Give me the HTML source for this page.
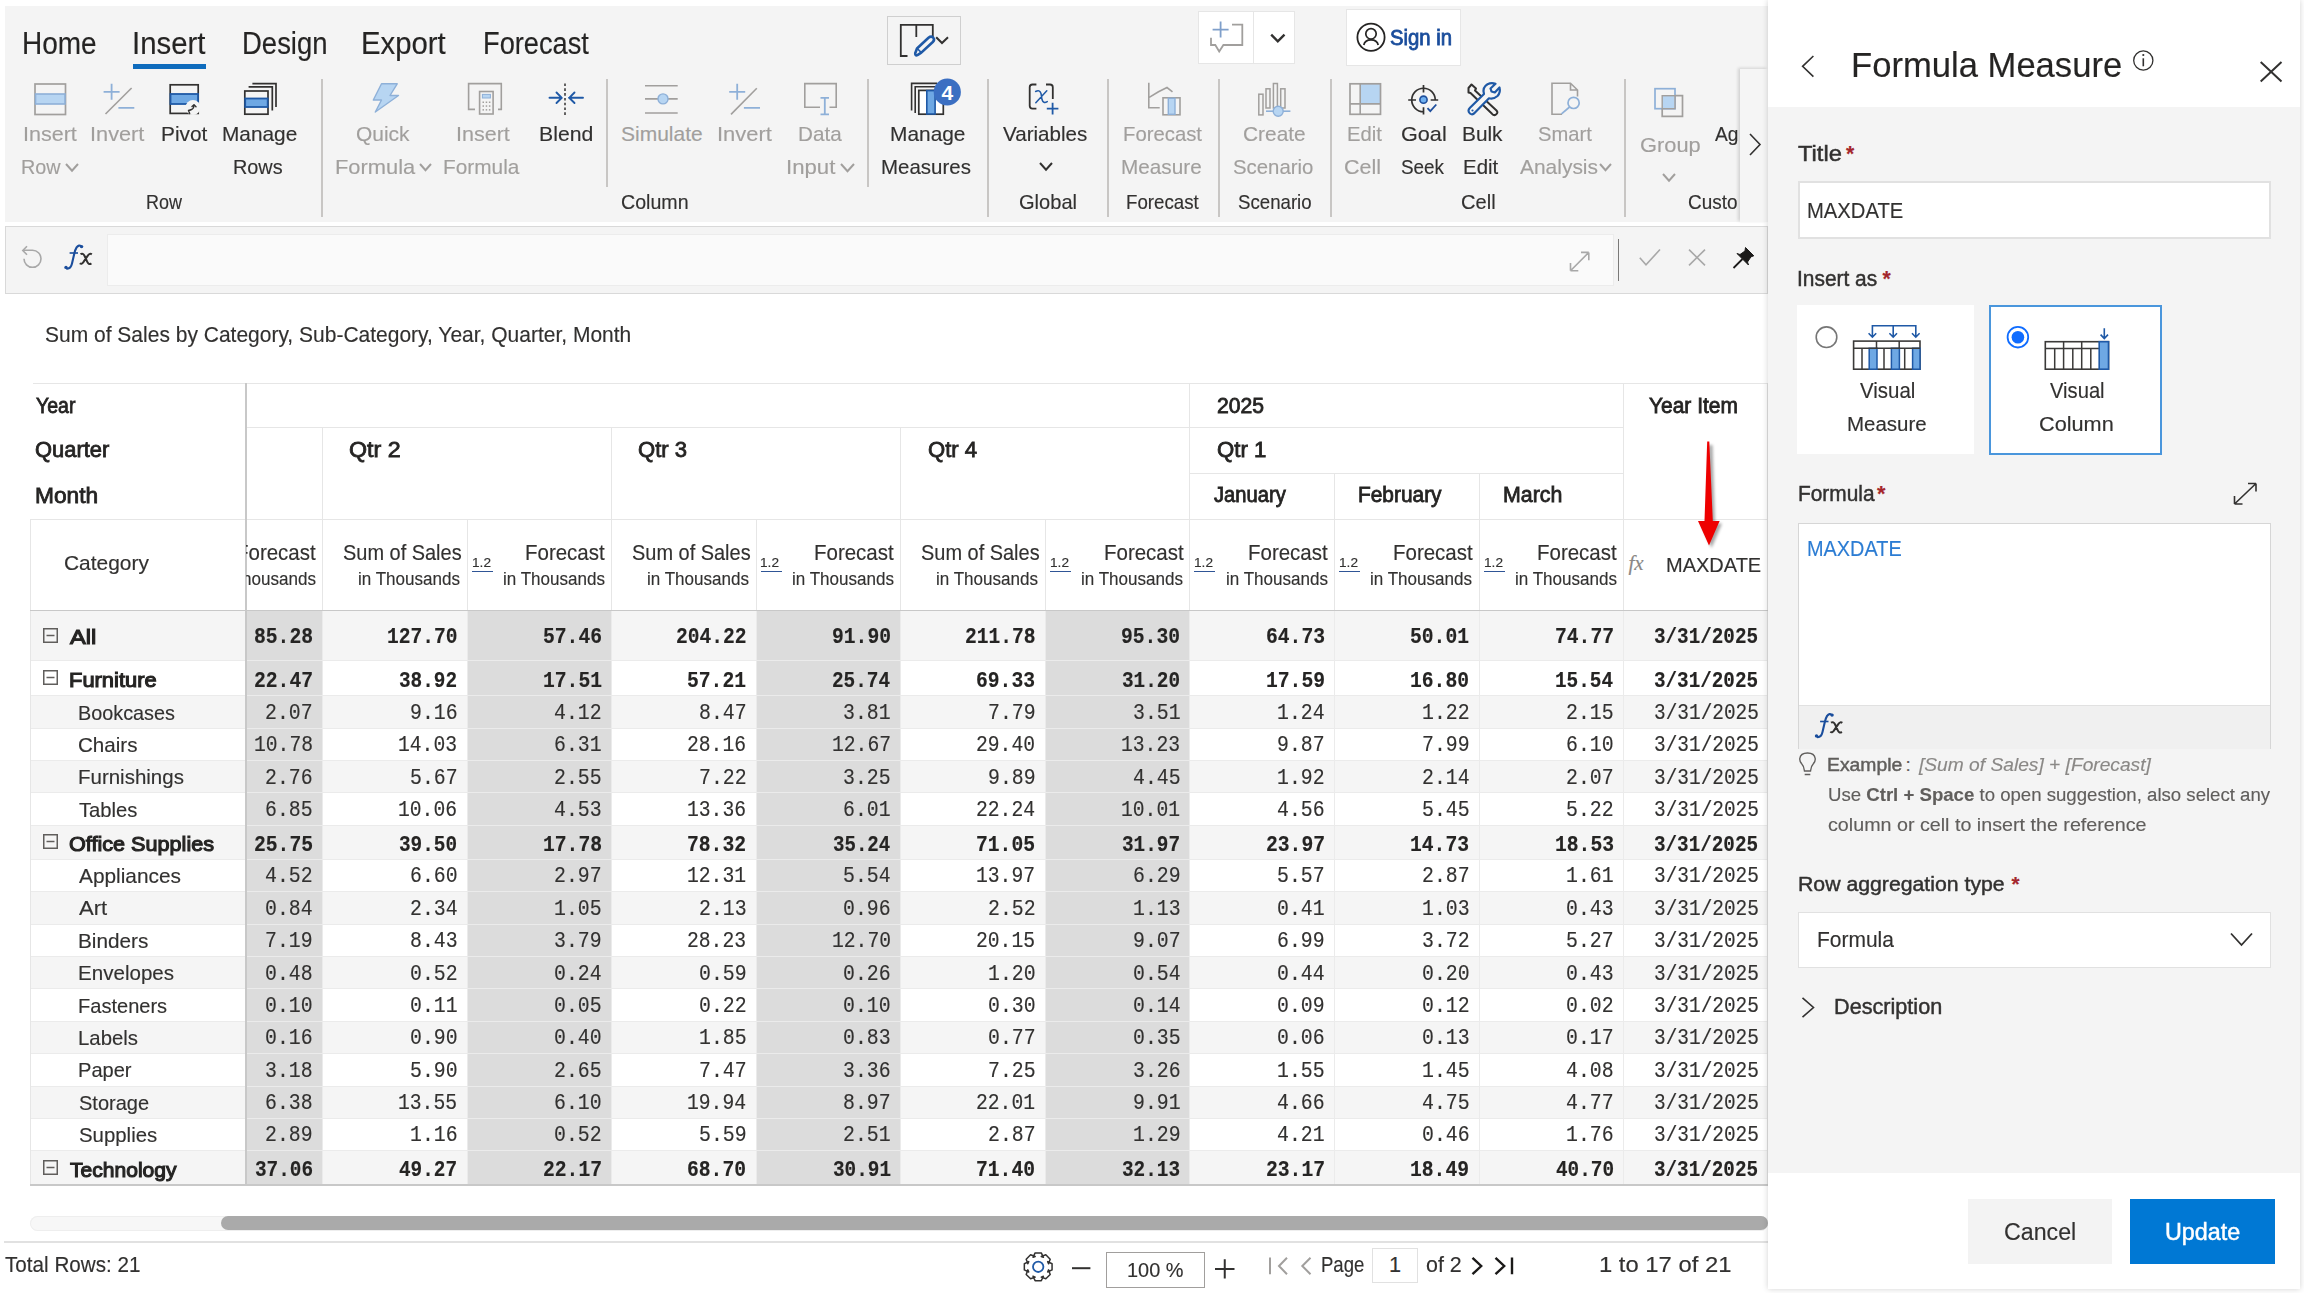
<!DOCTYPE html>
<html><head><meta charset="utf-8"><title>Formula Measure</title>
<style>
html,body{margin:0;padding:0;}
body{width:2304px;height:1293px;position:relative;overflow:hidden;background:#fff;font-family:'Liberation Sans', sans-serif;}
.a{position:absolute;}
.t{position:absolute;white-space:nowrap;line-height:1;-webkit-text-stroke:0.15px currentColor;}
</style></head><body>
<div class="a" style="left:5px;top:6px;width:1763px;height:216px;background:#f4f4f4;"></div>
<div class="t" id="t1" style="top:27.68px;font-size:30.43px;color:#252423;font-weight:normal;font-family:'Liberation Sans', sans-serif;font-style:normal;left:22.16px;transform:scaleX(0.9204);transform-origin:0 50%;">Home</div>
<div class="t" id="t2" style="top:27.68px;font-size:30.43px;color:#252423;font-weight:normal;font-family:'Liberation Sans', sans-serif;font-style:normal;left:132.07px;transform:scaleX(0.9647);transform-origin:0 50%;">Insert</div>
<div class="t" id="t3" style="top:27.68px;font-size:30.43px;color:#252423;font-weight:normal;font-family:'Liberation Sans', sans-serif;font-style:normal;left:241.69px;transform:scaleX(0.9033);transform-origin:0 50%;">Design</div>
<div class="t" id="t4" style="top:27.68px;font-size:30.43px;color:#252423;font-weight:normal;font-family:'Liberation Sans', sans-serif;font-style:normal;left:361.37px;transform:scaleX(0.9633);transform-origin:0 50%;">Export</div>
<div class="t" id="t5" style="top:27.68px;font-size:30.43px;color:#252423;font-weight:normal;font-family:'Liberation Sans', sans-serif;font-style:normal;left:482.61px;transform:scaleX(0.8948);transform-origin:0 50%;">Forecast</div>
<div class="a" style="left:133px;top:64px;width:73px;height:5px;background:#0f6cbd;"></div>
<div class="a" style="left:887px;top:16px;width:74px;height:49px;background:#f4f4f4;box-sizing:border-box;border:1px solid #cfcfcf;"></div>
<div class="a" style="left:1198px;top:11px;width:97px;height:53px;background:#fff;box-sizing:border-box;border:1px solid #e6e6e6;"></div>
<div class="a" style="left:1253px;top:11px;width:1px;height:53px;background:#e6e6e6;"></div>
<div class="a" style="left:1346px;top:9px;width:115px;height:57px;background:#fff;box-sizing:border-box;border:1px solid #e6e6e6;"></div>
<div class="t" id="t6" style="top:27.32px;font-size:21.16px;color:#1a4d9c;font-weight:normal;font-family:'Liberation Sans', sans-serif;font-style:normal;-webkit-text-stroke:0.8px currentColor;left:1389.50px;transform:scaleX(0.9606);transform-origin:0 50%;">Sign in</div>
<div class="a" style="left:321px;top:79px;width:2px;height:138px;background:#c8c6c4;"></div>
<div class="a" style="left:606px;top:79px;width:2px;height:108px;background:#c8c6c4;"></div>
<div class="a" style="left:867px;top:79px;width:2px;height:108px;background:#c8c6c4;"></div>
<div class="a" style="left:987px;top:79px;width:2px;height:138px;background:#c8c6c4;"></div>
<div class="a" style="left:1107px;top:79px;width:2px;height:138px;background:#c8c6c4;"></div>
<div class="a" style="left:1218px;top:79px;width:2px;height:138px;background:#c8c6c4;"></div>
<div class="a" style="left:1330px;top:79px;width:2px;height:138px;background:#c8c6c4;"></div>
<div class="a" style="left:1624px;top:79px;width:2px;height:138px;background:#c8c6c4;"></div>
<div class="t" id="t7" style="top:123.44px;font-size:21.01px;color:#a19f9d;font-weight:normal;font-family:'Liberation Sans', sans-serif;font-style:normal;left:22.97px;transform:scaleX(1.0254);transform-origin:0 50%;">Insert</div>
<div class="t" id="t8" style="top:155.54px;font-size:21.01px;color:#a19f9d;font-weight:normal;font-family:'Liberation Sans', sans-serif;font-style:normal;left:20.66px;transform:scaleX(0.9416);transform-origin:0 50%;">Row</div>
<svg class="a" style="left:65px;top:163px;" width="14" height="9.699999999999989" viewBox="0 0 14 9.699999999999989" fill="none"><polyline points="1,1 7.0,7.700000000000001 13,1" stroke="#a19f9d" stroke-width="2" fill="none"/></svg>
<div class="t" id="t9" style="top:123.44px;font-size:21.01px;color:#a19f9d;font-weight:normal;font-family:'Liberation Sans', sans-serif;font-style:normal;left:89.96px;transform:scaleX(1.0351);transform-origin:0 50%;">Invert</div>
<div class="t" id="t10" style="top:123.44px;font-size:21.01px;color:#323130;font-weight:normal;font-family:'Liberation Sans', sans-serif;font-style:normal;left:160.51px;transform:scaleX(0.9923);transform-origin:0 50%;">Pivot</div>
<div class="t" id="t11" style="top:123.44px;font-size:21.01px;color:#323130;font-weight:normal;font-family:'Liberation Sans', sans-serif;font-style:normal;left:222.41px;transform:scaleX(0.9918);transform-origin:0 50%;">Manage</div>
<div class="t" id="t12" style="top:155.54px;font-size:21.01px;color:#323130;font-weight:normal;font-family:'Liberation Sans', sans-serif;font-style:normal;left:233.46px;transform:scaleX(0.9449);transform-origin:0 50%;">Rows</div>
<div class="t" id="t13" style="top:190.84px;font-size:21.01px;color:#323130;font-weight:normal;font-family:'Liberation Sans', sans-serif;font-style:normal;left:146.14px;transform:scaleX(0.8555);transform-origin:0 50%;">Row</div>
<div class="t" id="t14" style="top:123.44px;font-size:21.01px;color:#a19f9d;font-weight:normal;font-family:'Liberation Sans', sans-serif;font-style:normal;left:356.00px;transform:scaleX(0.9966);transform-origin:0 50%;">Quick</div>
<div class="t" id="t15" style="top:155.54px;font-size:21.01px;color:#a19f9d;font-weight:normal;font-family:'Liberation Sans', sans-serif;font-style:normal;left:335.46px;transform:scaleX(1.0414);transform-origin:0 50%;">Formula</div>
<svg class="a" style="left:419px;top:163px;" width="13" height="9.150000000000006" viewBox="0 0 13 9.150000000000006" fill="none"><polyline points="1,1 6.5,7.15 12,1" stroke="#a19f9d" stroke-width="2" fill="none"/></svg>
<div class="t" id="t16" style="top:123.44px;font-size:21.01px;color:#a19f9d;font-weight:normal;font-family:'Liberation Sans', sans-serif;font-style:normal;left:455.97px;transform:scaleX(1.0254);transform-origin:0 50%;">Insert</div>
<div class="t" id="t17" style="top:155.54px;font-size:21.01px;color:#a19f9d;font-weight:normal;font-family:'Liberation Sans', sans-serif;font-style:normal;left:443.01px;transform:scaleX(0.9916);transform-origin:0 50%;">Formula</div>
<div class="t" id="t18" style="top:123.44px;font-size:21.01px;color:#323130;font-weight:normal;font-family:'Liberation Sans', sans-serif;font-style:normal;left:538.99px;transform:scaleX(1.0109);transform-origin:0 50%;">Blend</div>
<div class="t" id="t19" style="top:123.44px;font-size:21.01px;color:#a19f9d;font-weight:normal;font-family:'Liberation Sans', sans-serif;font-style:normal;left:621.00px;">Simulate</div>
<div class="t" id="t20" style="top:123.44px;font-size:21.01px;color:#a19f9d;font-weight:normal;font-family:'Liberation Sans', sans-serif;font-style:normal;left:716.96px;transform:scaleX(1.0448);transform-origin:0 50%;">Invert</div>
<div class="t" id="t21" style="top:123.44px;font-size:21.01px;color:#a19f9d;font-weight:normal;font-family:'Liberation Sans', sans-serif;font-style:normal;left:798.02px;transform:scaleX(0.9845);transform-origin:0 50%;">Data</div>
<div class="t" id="t22" style="top:155.54px;font-size:21.01px;color:#a19f9d;font-weight:normal;font-family:'Liberation Sans', sans-serif;font-style:normal;left:786.44px;transform:scaleX(1.0573);transform-origin:0 50%;">Input</div>
<svg class="a" style="left:840px;top:163px;" width="15" height="10.25" viewBox="0 0 15 10.25" fill="none"><polyline points="1,1 7.5,8.25 14,1" stroke="#a19f9d" stroke-width="2" fill="none"/></svg>
<div class="t" id="t23" style="top:190.84px;font-size:21.01px;color:#323130;font-weight:normal;font-family:'Liberation Sans', sans-serif;font-style:normal;left:621.07px;transform:scaleX(0.9338);transform-origin:0 50%;">Column</div>
<div class="t" id="t24" style="top:123.44px;font-size:21.01px;color:#323130;font-weight:normal;font-family:'Liberation Sans', sans-serif;font-style:normal;left:890.41px;transform:scaleX(0.9945);transform-origin:0 50%;">Manage</div>
<div class="t" id="t25" style="top:155.54px;font-size:21.01px;color:#323130;font-weight:normal;font-family:'Liberation Sans', sans-serif;font-style:normal;left:881.33px;transform:scaleX(0.9746);transform-origin:0 50%;">Measures</div>
<div class="t" id="t26" style="top:123.44px;font-size:21.01px;color:#323130;font-weight:normal;font-family:'Liberation Sans', sans-serif;font-style:normal;left:1002.60px;transform:scaleX(0.9802);transform-origin:0 50%;">Variables</div>
<svg class="a" style="left:1039px;top:162px;" width="14" height="9.699999999999989" viewBox="0 0 14 9.699999999999989" fill="none"><polyline points="1,1 7.0,7.700000000000001 13,1" stroke="#323130" stroke-width="2" fill="none"/></svg>
<div class="t" id="t27" style="top:190.84px;font-size:21.01px;color:#323130;font-weight:normal;font-family:'Liberation Sans', sans-serif;font-style:normal;left:1019.04px;transform:scaleX(0.9553);transform-origin:0 50%;">Global</div>
<div class="t" id="t28" style="top:123.44px;font-size:21.01px;color:#a19f9d;font-weight:normal;font-family:'Liberation Sans', sans-serif;font-style:normal;left:1123.43px;transform:scaleX(0.9671);transform-origin:0 50%;">Forecast</div>
<div class="t" id="t29" style="top:155.54px;font-size:21.01px;color:#a19f9d;font-weight:normal;font-family:'Liberation Sans', sans-serif;font-style:normal;left:1121.01px;transform:scaleX(0.9872);transform-origin:0 50%;">Measure</div>
<div class="t" id="t30" style="top:190.84px;font-size:21.01px;color:#323130;font-weight:normal;font-family:'Liberation Sans', sans-serif;font-style:normal;left:1126.11px;transform:scaleX(0.8904);transform-origin:0 50%;">Forecast</div>
<div class="t" id="t31" style="top:123.44px;font-size:21.01px;color:#a19f9d;font-weight:normal;font-family:'Liberation Sans', sans-serif;font-style:normal;left:1243.01px;transform:scaleX(0.9943);transform-origin:0 50%;">Create</div>
<div class="t" id="t32" style="top:155.54px;font-size:21.01px;color:#a19f9d;font-weight:normal;font-family:'Liberation Sans', sans-serif;font-style:normal;left:1232.80px;transform:scaleX(0.9695);transform-origin:0 50%;">Scenario</div>
<div class="t" id="t33" style="top:190.84px;font-size:21.01px;color:#323130;font-weight:normal;font-family:'Liberation Sans', sans-serif;font-style:normal;left:1238.00px;transform:scaleX(0.8880);transform-origin:0 50%;">Scenario</div>
<div class="t" id="t34" style="top:123.44px;font-size:21.01px;color:#a19f9d;font-weight:normal;font-family:'Liberation Sans', sans-serif;font-style:normal;left:1347.04px;transform:scaleX(0.9618);transform-origin:0 50%;">Edit</div>
<div class="t" id="t35" style="top:155.54px;font-size:21.01px;color:#a19f9d;font-weight:normal;font-family:'Liberation Sans', sans-serif;font-style:normal;left:1343.97px;transform:scaleX(1.0258);transform-origin:0 50%;">Cell</div>
<div class="t" id="t36" style="top:123.44px;font-size:21.01px;color:#323130;font-weight:normal;font-family:'Liberation Sans', sans-serif;font-style:normal;left:1400.97px;transform:scaleX(1.0306);transform-origin:0 50%;">Goal</div>
<div class="t" id="t37" style="top:155.54px;font-size:21.01px;color:#323130;font-weight:normal;font-family:'Liberation Sans', sans-serif;font-style:normal;left:1400.50px;transform:scaleX(0.8994);transform-origin:0 50%;">Seek</div>
<div class="t" id="t38" style="top:123.44px;font-size:21.01px;color:#323130;font-weight:normal;font-family:'Liberation Sans', sans-serif;font-style:normal;left:1462.01px;transform:scaleX(0.9913);transform-origin:0 50%;">Bulk</div>
<div class="t" id="t39" style="top:155.54px;font-size:21.01px;color:#323130;font-weight:normal;font-family:'Liberation Sans', sans-serif;font-style:normal;left:1462.63px;transform:scaleX(0.9731);transform-origin:0 50%;">Edit</div>
<div class="t" id="t40" style="top:123.44px;font-size:21.01px;color:#a19f9d;font-weight:normal;font-family:'Liberation Sans', sans-serif;font-style:normal;left:1538.00px;transform:scaleX(0.9613);transform-origin:0 50%;">Smart</div>
<div class="t" id="t41" style="top:155.54px;font-size:21.01px;color:#a19f9d;font-weight:normal;font-family:'Liberation Sans', sans-serif;font-style:normal;left:1519.50px;transform:scaleX(0.9975);transform-origin:0 50%;">Analysis</div>
<svg class="a" style="left:1599px;top:163px;" width="13" height="9.150000000000006" viewBox="0 0 13 9.150000000000006" fill="none"><polyline points="1,1 6.5,7.15 12,1" stroke="#a19f9d" stroke-width="2" fill="none"/></svg>
<div class="t" id="t42" style="top:190.84px;font-size:21.01px;color:#323130;font-weight:normal;font-family:'Liberation Sans', sans-serif;font-style:normal;left:1461.04px;transform:scaleX(0.9562);transform-origin:0 50%;">Cell</div>
<div class="t" id="t43" style="top:133.64px;font-size:21.01px;color:#a19f9d;font-weight:normal;font-family:'Liberation Sans', sans-serif;font-style:normal;left:1639.96px;transform:scaleX(1.0408);transform-origin:0 50%;">Group</div>
<svg class="a" style="left:1662px;top:173px;" width="14" height="9.699999999999989" viewBox="0 0 14 9.699999999999989" fill="none"><polyline points="1,1 7.0,7.700000000000001 13,1" stroke="#a19f9d" stroke-width="2" fill="none"/></svg>
<div class="t" id="t44" style="top:123.44px;font-size:21.01px;color:#323130;font-weight:normal;font-family:'Liberation Sans', sans-serif;font-style:normal;left:1715.00px;transform:scaleX(0.9118);transform-origin:0 50%;">Ag</div>
<div class="t" id="t45" style="top:190.84px;font-size:21.01px;color:#323130;font-weight:normal;font-family:'Liberation Sans', sans-serif;font-style:normal;left:1688.10px;transform:scaleX(0.9026);transform-origin:0 50%;">Custo</div>
<div class="a" style="left:1740px;top:69px;width:28px;height:153px;background:#f5f5f5;box-shadow:-2px -1px 3px rgba(0,0,0,0.14);"></div>
<svg class="a" style="left:1748px;top:133px;" width="14" height="24" viewBox="0 0 14 24" fill="none"><polyline points="2,1 12,11.5 2,22" stroke="#323130" stroke-width="1.6" fill="none"/></svg>
<div class="a" style="left:5px;top:226px;width:1763px;height:68px;background:#f4f4f4;box-sizing:border-box;border:1px solid #d9d9d9;"></div>
<div class="a" style="left:107px;top:234px;width:1507px;height:52px;background:#fafafa;box-sizing:border-box;border:1px solid #ececec;"></div>
<div class="a" style="left:1617.5px;top:239px;width:1.0px;height:42px;background:#7a7978;"></div>
<div class="t" id="t46" style="top:323.53px;font-size:21.74px;color:#323130;font-weight:normal;font-family:'Liberation Sans', sans-serif;font-style:normal;left:45.40px;transform:scaleX(0.9661);transform-origin:0 50%;">Sum of Sales by Category, Sub-Category, Year, Quarter, Month</div>
<div class="a" style="left:30px;top:383px;width:1738px;height:228px;background:#fff;"></div>
<div class="a" style="left:30px;top:611px;width:1738px;height:49.299999999999955px;background:#f5f5f5;"></div>
<div class="a" style="left:30px;top:660.3px;width:1738px;height:35.0px;background:#ffffff;"></div>
<div class="a" style="left:30px;top:695.3px;width:1738px;height:32.40000000000009px;background:#f5f5f5;"></div>
<div class="a" style="left:30px;top:727.7px;width:1738px;height:32.39999999999998px;background:#ffffff;"></div>
<div class="a" style="left:30px;top:760.1px;width:1738px;height:32.299999999999955px;background:#f5f5f5;"></div>
<div class="a" style="left:30px;top:792.4px;width:1738px;height:32.39999999999998px;background:#ffffff;"></div>
<div class="a" style="left:30px;top:824.8px;width:1738px;height:34.0px;background:#f5f5f5;"></div>
<div class="a" style="left:30px;top:858.8px;width:1738px;height:32.40000000000009px;background:#ffffff;"></div>
<div class="a" style="left:30px;top:891.2px;width:1738px;height:32.39999999999998px;background:#f5f5f5;"></div>
<div class="a" style="left:30px;top:923.6px;width:1738px;height:32.39999999999998px;background:#ffffff;"></div>
<div class="a" style="left:30px;top:956.0px;width:1738px;height:32.299999999999955px;background:#f5f5f5;"></div>
<div class="a" style="left:30px;top:988.3px;width:1738px;height:32.40000000000009px;background:#ffffff;"></div>
<div class="a" style="left:30px;top:1020.7px;width:1738px;height:32.399999999999864px;background:#f5f5f5;"></div>
<div class="a" style="left:30px;top:1053.1px;width:1738px;height:32.40000000000009px;background:#ffffff;"></div>
<div class="a" style="left:30px;top:1085.5px;width:1738px;height:32.40000000000009px;background:#f5f5f5;"></div>
<div class="a" style="left:30px;top:1117.9px;width:1738px;height:32.299999999999955px;background:#ffffff;"></div>
<div class="a" style="left:30px;top:1150.2px;width:1738px;height:34.700000000000045px;background:#f5f5f5;"></div>
<div class="a" style="left:246px;top:611px;width:76px;height:573.9000000000001px;background:#dcdcdc;"></div>
<div class="a" style="left:466.6px;top:611px;width:144.39999999999998px;height:573.9000000000001px;background:#dcdcdc;"></div>
<div class="a" style="left:755.5px;top:611px;width:144.5px;height:573.9000000000001px;background:#dcdcdc;"></div>
<div class="a" style="left:1044.8px;top:611px;width:144.60000000000014px;height:573.9000000000001px;background:#dcdcdc;"></div>
<div class="a" style="left:30px;top:660.3px;width:1738px;height:1.0px;background:#ebebeb;"></div>
<div class="a" style="left:30px;top:695.3px;width:1738px;height:1.0px;background:#ebebeb;"></div>
<div class="a" style="left:30px;top:727.7px;width:1738px;height:1.0px;background:#ebebeb;"></div>
<div class="a" style="left:30px;top:760.1px;width:1738px;height:1.0px;background:#ebebeb;"></div>
<div class="a" style="left:30px;top:792.4px;width:1738px;height:1.0px;background:#ebebeb;"></div>
<div class="a" style="left:30px;top:824.8px;width:1738px;height:1.0px;background:#ebebeb;"></div>
<div class="a" style="left:30px;top:858.8px;width:1738px;height:1.0px;background:#ebebeb;"></div>
<div class="a" style="left:30px;top:891.2px;width:1738px;height:1.0px;background:#ebebeb;"></div>
<div class="a" style="left:30px;top:923.6px;width:1738px;height:1.0px;background:#ebebeb;"></div>
<div class="a" style="left:30px;top:956.0px;width:1738px;height:1.0px;background:#ebebeb;"></div>
<div class="a" style="left:30px;top:988.3px;width:1738px;height:1.0px;background:#ebebeb;"></div>
<div class="a" style="left:30px;top:1020.7px;width:1738px;height:1.0px;background:#ebebeb;"></div>
<div class="a" style="left:30px;top:1053.1px;width:1738px;height:1.0px;background:#ebebeb;"></div>
<div class="a" style="left:30px;top:1085.5px;width:1738px;height:1.0px;background:#ebebeb;"></div>
<div class="a" style="left:30px;top:1117.9px;width:1738px;height:1.0px;background:#ebebeb;"></div>
<div class="a" style="left:30px;top:1150.2px;width:1738px;height:1.0px;background:#ebebeb;"></div>
<div class="a" style="left:322px;top:611px;width:1px;height:573.9000000000001px;background:#ebebeb;"></div>
<div class="a" style="left:466.6px;top:611px;width:1.0px;height:573.9000000000001px;background:#ebebeb;"></div>
<div class="a" style="left:611px;top:611px;width:1px;height:573.9000000000001px;background:#ebebeb;"></div>
<div class="a" style="left:755.5px;top:611px;width:1.0px;height:573.9000000000001px;background:#ebebeb;"></div>
<div class="a" style="left:900px;top:611px;width:1px;height:573.9000000000001px;background:#ebebeb;"></div>
<div class="a" style="left:1044.8px;top:611px;width:1.0px;height:573.9000000000001px;background:#ebebeb;"></div>
<div class="a" style="left:1189.4px;top:611px;width:1.0px;height:573.9000000000001px;background:#ebebeb;"></div>
<div class="a" style="left:1334px;top:611px;width:1px;height:573.9000000000001px;background:#ebebeb;"></div>
<div class="a" style="left:1478.6px;top:611px;width:1.0px;height:573.9000000000001px;background:#ebebeb;"></div>
<div class="a" style="left:1623.2px;top:611px;width:1.0px;height:573.9000000000001px;background:#ebebeb;"></div>
<div class="a" style="left:33px;top:383px;width:1735px;height:1px;background:#e6e6e6;"></div>
<div class="a" style="left:246px;top:427px;width:1377px;height:1px;background:#e6e6e6;"></div>
<div class="a" style="left:1189px;top:473px;width:434px;height:1px;background:#e6e6e6;"></div>
<div class="a" style="left:30px;top:519px;width:1738px;height:1px;background:#e6e6e6;"></div>
<div class="a" style="left:322px;top:427px;width:1px;height:184px;background:#e6e6e6;"></div>
<div class="a" style="left:611px;top:427px;width:1px;height:184px;background:#e6e6e6;"></div>
<div class="a" style="left:900px;top:427px;width:1px;height:184px;background:#e6e6e6;"></div>
<div class="a" style="left:1189px;top:383px;width:1px;height:228px;background:#e6e6e6;"></div>
<div class="a" style="left:1623px;top:383px;width:1px;height:228px;background:#e6e6e6;"></div>
<div class="a" style="left:466.6px;top:519px;width:1.0px;height:92px;background:#e6e6e6;"></div>
<div class="a" style="left:755.5px;top:519px;width:1.0px;height:92px;background:#e6e6e6;"></div>
<div class="a" style="left:1044.8px;top:519px;width:1.0px;height:92px;background:#e6e6e6;"></div>
<div class="a" style="left:1334px;top:473px;width:1px;height:138px;background:#e6e6e6;"></div>
<div class="a" style="left:1478.6px;top:473px;width:1.0px;height:138px;background:#e6e6e6;"></div>
<div class="a" style="left:30px;top:519px;width:1px;height:665.9000000000001px;background:#e6e6e6;"></div>
<div class="a" style="left:1767px;top:383px;width:1px;height:801.9000000000001px;background:#e1e1e1;"></div>
<div class="a" style="left:30px;top:610px;width:1738px;height:1px;background:#c8c8c8;"></div>
<div class="a" style="left:30px;top:1183.9px;width:1738px;height:2.0px;background:#c8c8c8;"></div>
<div class="a" style="left:245px;top:383px;width:2px;height:801.9000000000001px;background:#c8c8c8;"></div>
<div class="t" id="t47" style="top:395.38px;font-size:21.74px;color:#252423;font-weight:normal;font-family:'Liberation Sans', sans-serif;font-style:normal;-webkit-text-stroke:0.8px currentColor;left:36.40px;transform:scaleX(0.8975);transform-origin:0 50%;">Year</div>
<div class="t" id="t48" style="top:439.13px;font-size:21.74px;color:#252423;font-weight:normal;font-family:'Liberation Sans', sans-serif;font-style:normal;-webkit-text-stroke:0.8px currentColor;left:34.99px;transform:scaleX(1.0077);transform-origin:0 50%;">Quarter</div>
<div class="t" id="t49" style="top:484.93px;font-size:21.74px;color:#252423;font-weight:normal;font-family:'Liberation Sans', sans-serif;font-style:normal;-webkit-text-stroke:0.8px currentColor;left:34.95px;transform:scaleX(1.0460);transform-origin:0 50%;">Month</div>
<div class="t" id="t50" style="top:394.83px;font-size:21.74px;color:#252423;font-weight:normal;font-family:'Liberation Sans', sans-serif;font-style:normal;-webkit-text-stroke:0.8px currentColor;left:1216.83px;transform:scaleX(0.9733);transform-origin:0 50%;">2025</div>
<div class="t" id="t51" style="top:395.03px;font-size:21.74px;color:#252423;font-weight:normal;font-family:'Liberation Sans', sans-serif;font-style:normal;-webkit-text-stroke:0.8px currentColor;left:1648.80px;transform:scaleX(0.9636);transform-origin:0 50%;">Year Item</div>
<div class="t" id="t52" style="top:439.43px;font-size:21.74px;color:#252423;font-weight:normal;font-family:'Liberation Sans', sans-serif;font-style:normal;-webkit-text-stroke:0.8px currentColor;left:348.53px;transform:scaleX(1.0688);transform-origin:0 50%;">Qtr 2</div>
<div class="t" id="t53" style="top:439.43px;font-size:21.74px;color:#252423;font-weight:normal;font-family:'Liberation Sans', sans-serif;font-style:normal;-webkit-text-stroke:0.8px currentColor;left:637.98px;transform:scaleX(1.0165);transform-origin:0 50%;">Qtr 3</div>
<div class="t" id="t54" style="top:439.43px;font-size:21.74px;color:#252423;font-weight:normal;font-family:'Liberation Sans', sans-serif;font-style:normal;-webkit-text-stroke:0.8px currentColor;left:927.58px;transform:scaleX(1.0165);transform-origin:0 50%;">Qtr 4</div>
<div class="t" id="t55" style="top:439.43px;font-size:21.74px;color:#252423;font-weight:normal;font-family:'Liberation Sans', sans-serif;font-style:normal;-webkit-text-stroke:0.8px currentColor;left:1216.78px;transform:scaleX(1.0207);transform-origin:0 50%;">Qtr 1</div>
<div class="t" id="t56" style="top:484.43px;font-size:21.74px;color:#252423;font-weight:normal;font-family:'Liberation Sans', sans-serif;font-style:normal;-webkit-text-stroke:0.8px currentColor;left:1214.40px;transform:scaleX(0.9276);transform-origin:0 50%;">January</div>
<div class="t" id="t57" style="top:484.43px;font-size:21.74px;color:#252423;font-weight:normal;font-family:'Liberation Sans', sans-serif;font-style:normal;-webkit-text-stroke:0.8px currentColor;left:1358.04px;transform:scaleX(0.9605);transform-origin:0 50%;">February</div>
<div class="t" id="t58" style="top:484.43px;font-size:21.74px;color:#252423;font-weight:normal;font-family:'Liberation Sans', sans-serif;font-style:normal;-webkit-text-stroke:0.8px currentColor;left:1503.22px;transform:scaleX(0.9829);transform-origin:0 50%;">March</div>
<div class="t" id="t59" style="top:553.26px;font-size:20.29px;color:#323130;font-weight:normal;font-family:'Liberation Sans', sans-serif;font-style:normal;left:63.57px;transform:scaleX(1.0310);transform-origin:0 50%;">Category</div>
<div class="a" style="left:246px;top:519px;width:76px;height:91px;overflow:hidden">
<div class="a" style="left:-246px;top:-519px;width:2304px;height:1293px">
<div class="t" id="t60" style="top:543.00px;font-size:21.30px;color:#323130;font-weight:normal;font-family:'Liberation Sans', sans-serif;font-style:normal;left:236.24px;transform:scaleX(0.9618);transform-origin:0 50%;">Forecast</div>
<div class="t" id="t61" style="top:569.99px;font-size:18.12px;color:#323130;font-weight:normal;font-family:'Liberation Sans', sans-serif;font-style:normal;left:213.66px;transform:scaleX(0.9417);transform-origin:0 50%;">in Thousands</div>
</div></div>
<div class="t" id="t62" style="top:543.00px;font-size:21.30px;color:#323130;font-weight:normal;font-family:'Liberation Sans', sans-serif;font-style:normal;left:342.60px;transform:scaleX(0.9364);transform-origin:0 50%;">Sum of Sales</div>
<div class="t" id="t63" style="top:569.99px;font-size:18.12px;color:#323130;font-weight:normal;font-family:'Liberation Sans', sans-serif;font-style:normal;left:358.26px;transform:scaleX(0.9417);transform-origin:0 50%;">in Thousands</div>
<div class="t" id="t64" style="top:543.00px;font-size:21.30px;color:#323130;font-weight:normal;font-family:'Liberation Sans', sans-serif;font-style:normal;left:525.24px;transform:scaleX(0.9618);transform-origin:0 50%;">Forecast</div>
<div class="t" id="t65" style="top:556.48px;font-size:13.04px;color:#323130;font-weight:normal;font-family:'Liberation Sans', sans-serif;font-style:normal;left:471.55px;transform:scaleX(1.0493);transform-origin:0 50%;">1.2</div>
<div class="a" style="left:471.6px;top:571px;width:21.0px;height:1px;background:#2f5596;"></div>
<div class="t" id="t66" style="top:569.99px;font-size:18.12px;color:#323130;font-weight:normal;font-family:'Liberation Sans', sans-serif;font-style:normal;left:502.66px;transform:scaleX(0.9417);transform-origin:0 50%;">in Thousands</div>
<div class="t" id="t67" style="top:543.00px;font-size:21.30px;color:#323130;font-weight:normal;font-family:'Liberation Sans', sans-serif;font-style:normal;left:631.50px;transform:scaleX(0.9364);transform-origin:0 50%;">Sum of Sales</div>
<div class="t" id="t68" style="top:569.99px;font-size:18.12px;color:#323130;font-weight:normal;font-family:'Liberation Sans', sans-serif;font-style:normal;left:647.16px;transform:scaleX(0.9417);transform-origin:0 50%;">in Thousands</div>
<div class="t" id="t69" style="top:543.00px;font-size:21.30px;color:#323130;font-weight:normal;font-family:'Liberation Sans', sans-serif;font-style:normal;left:814.24px;transform:scaleX(0.9618);transform-origin:0 50%;">Forecast</div>
<div class="t" id="t70" style="top:556.48px;font-size:13.04px;color:#323130;font-weight:normal;font-family:'Liberation Sans', sans-serif;font-style:normal;left:760.45px;transform:scaleX(1.0493);transform-origin:0 50%;">1.2</div>
<div class="a" style="left:760.5px;top:571px;width:21.0px;height:1px;background:#2f5596;"></div>
<div class="t" id="t71" style="top:569.99px;font-size:18.12px;color:#323130;font-weight:normal;font-family:'Liberation Sans', sans-serif;font-style:normal;left:791.66px;transform:scaleX(0.9417);transform-origin:0 50%;">in Thousands</div>
<div class="t" id="t72" style="top:543.00px;font-size:21.30px;color:#323130;font-weight:normal;font-family:'Liberation Sans', sans-serif;font-style:normal;left:920.80px;transform:scaleX(0.9364);transform-origin:0 50%;">Sum of Sales</div>
<div class="t" id="t73" style="top:569.99px;font-size:18.12px;color:#323130;font-weight:normal;font-family:'Liberation Sans', sans-serif;font-style:normal;left:936.46px;transform:scaleX(0.9417);transform-origin:0 50%;">in Thousands</div>
<div class="t" id="t74" style="top:543.00px;font-size:21.30px;color:#323130;font-weight:normal;font-family:'Liberation Sans', sans-serif;font-style:normal;left:1103.64px;transform:scaleX(0.9618);transform-origin:0 50%;">Forecast</div>
<div class="t" id="t75" style="top:556.48px;font-size:13.04px;color:#323130;font-weight:normal;font-family:'Liberation Sans', sans-serif;font-style:normal;left:1049.75px;transform:scaleX(1.0493);transform-origin:0 50%;">1.2</div>
<div class="a" style="left:1049.8px;top:571px;width:21.0px;height:1px;background:#2f5596;"></div>
<div class="t" id="t76" style="top:569.99px;font-size:18.12px;color:#323130;font-weight:normal;font-family:'Liberation Sans', sans-serif;font-style:normal;left:1081.06px;transform:scaleX(0.9417);transform-origin:0 50%;">in Thousands</div>
<div class="t" id="t77" style="top:543.00px;font-size:21.30px;color:#323130;font-weight:normal;font-family:'Liberation Sans', sans-serif;font-style:normal;left:1248.24px;transform:scaleX(0.9618);transform-origin:0 50%;">Forecast</div>
<div class="t" id="t78" style="top:556.48px;font-size:13.04px;color:#323130;font-weight:normal;font-family:'Liberation Sans', sans-serif;font-style:normal;left:1194.35px;transform:scaleX(1.0493);transform-origin:0 50%;">1.2</div>
<div class="a" style="left:1194.4px;top:571px;width:21.0px;height:1px;background:#2f5596;"></div>
<div class="t" id="t79" style="top:569.99px;font-size:18.12px;color:#323130;font-weight:normal;font-family:'Liberation Sans', sans-serif;font-style:normal;left:1225.66px;transform:scaleX(0.9417);transform-origin:0 50%;">in Thousands</div>
<div class="t" id="t80" style="top:543.00px;font-size:21.30px;color:#323130;font-weight:normal;font-family:'Liberation Sans', sans-serif;font-style:normal;left:1392.84px;transform:scaleX(0.9618);transform-origin:0 50%;">Forecast</div>
<div class="t" id="t81" style="top:556.48px;font-size:13.04px;color:#323130;font-weight:normal;font-family:'Liberation Sans', sans-serif;font-style:normal;left:1338.95px;transform:scaleX(1.0493);transform-origin:0 50%;">1.2</div>
<div class="a" style="left:1339px;top:571px;width:21px;height:1px;background:#2f5596;"></div>
<div class="t" id="t82" style="top:569.99px;font-size:18.12px;color:#323130;font-weight:normal;font-family:'Liberation Sans', sans-serif;font-style:normal;left:1370.26px;transform:scaleX(0.9417);transform-origin:0 50%;">in Thousands</div>
<div class="t" id="t83" style="top:543.00px;font-size:21.30px;color:#323130;font-weight:normal;font-family:'Liberation Sans', sans-serif;font-style:normal;left:1537.44px;transform:scaleX(0.9618);transform-origin:0 50%;">Forecast</div>
<div class="t" id="t84" style="top:556.48px;font-size:13.04px;color:#323130;font-weight:normal;font-family:'Liberation Sans', sans-serif;font-style:normal;left:1483.55px;transform:scaleX(1.0493);transform-origin:0 50%;">1.2</div>
<div class="a" style="left:1483.6px;top:571px;width:21.0px;height:1px;background:#2f5596;"></div>
<div class="t" id="t85" style="top:569.99px;font-size:18.12px;color:#323130;font-weight:normal;font-family:'Liberation Sans', sans-serif;font-style:normal;left:1514.86px;transform:scaleX(0.9417);transform-origin:0 50%;">in Thousands</div>
<div class="t" id="t86" style="top:553.31px;font-size:21.00px;color:#8a8886;font-weight:normal;font-family:'Liberation Serif', serif;font-style:italic;left:1628.40px;">fx</div>
<div class="t" id="t87" style="top:554.86px;font-size:20.29px;color:#323130;font-weight:normal;font-family:'Liberation Sans', sans-serif;font-style:normal;left:1666.31px;transform:scaleX(0.9863);transform-origin:0 50%;">MAXDATE</div>
<div class="t" id="t88" style="top:625.89px;font-size:21.01px;color:#252423;font-weight:normal;font-family:'Liberation Sans', sans-serif;font-style:normal;-webkit-text-stroke:1.1px currentColor;left:70.00px;transform:scaleX(1.1247);transform-origin:0 50%;">All</div>
<svg class="a" style="left:43px;top:627.65px;" width="15" height="15.0" viewBox="0 0 15 15.0" fill="none"><rect x="0.75" y="0.75" width="13.5" height="13.5" stroke="#605e5c" stroke-width="1.5"/><line x1="3.5" y1="7.5" x2="11.5" y2="7.5" stroke="#605e5c" stroke-width="1.5"/></svg>
<div class="t" id="t89" style="top:627.25px;font-size:21.30px;color:#252423;font-weight:bold;font-family:'Liberation Mono', monospace;font-style:normal;left:253.68px;transform:scaleX(0.9240);transform-origin:0 50%;">85.28</div>
<div class="t" id="t90" style="top:627.25px;font-size:21.30px;color:#252423;font-weight:bold;font-family:'Liberation Mono', monospace;font-style:normal;left:386.80px;transform:scaleX(0.9196);transform-origin:0 50%;">127.70</div>
<div class="t" id="t91" style="top:627.25px;font-size:21.30px;color:#252423;font-weight:bold;font-family:'Liberation Mono', monospace;font-style:normal;left:542.68px;transform:scaleX(0.9240);transform-origin:0 50%;">57.46</div>
<div class="t" id="t92" style="top:627.25px;font-size:21.30px;color:#252423;font-weight:bold;font-family:'Liberation Mono', monospace;font-style:normal;left:675.70px;transform:scaleX(0.9196);transform-origin:0 50%;">204.22</div>
<div class="t" id="t93" style="top:627.25px;font-size:21.30px;color:#252423;font-weight:bold;font-family:'Liberation Mono', monospace;font-style:normal;left:831.68px;transform:scaleX(0.9240);transform-origin:0 50%;">91.90</div>
<div class="t" id="t94" style="top:627.25px;font-size:21.30px;color:#252423;font-weight:bold;font-family:'Liberation Mono', monospace;font-style:normal;left:965.00px;transform:scaleX(0.9196);transform-origin:0 50%;">211.78</div>
<div class="t" id="t95" style="top:627.25px;font-size:21.30px;color:#252423;font-weight:bold;font-family:'Liberation Mono', monospace;font-style:normal;left:1121.08px;transform:scaleX(0.9240);transform-origin:0 50%;">95.30</div>
<div class="t" id="t96" style="top:627.25px;font-size:21.30px;color:#252423;font-weight:bold;font-family:'Liberation Mono', monospace;font-style:normal;left:1265.68px;transform:scaleX(0.9240);transform-origin:0 50%;">64.73</div>
<div class="t" id="t97" style="top:627.25px;font-size:21.30px;color:#252423;font-weight:bold;font-family:'Liberation Mono', monospace;font-style:normal;left:1410.28px;transform:scaleX(0.9240);transform-origin:0 50%;">50.01</div>
<div class="t" id="t98" style="top:627.25px;font-size:21.30px;color:#252423;font-weight:bold;font-family:'Liberation Mono', monospace;font-style:normal;left:1554.88px;transform:scaleX(0.9240);transform-origin:0 50%;">74.77</div>
<div class="t" id="t99" style="top:627.25px;font-size:21.30px;color:#252423;font-weight:bold;font-family:'Liberation Mono', monospace;font-style:normal;left:1654.48px;transform:scaleX(0.9044);transform-origin:0 50%;">3/31/2025</div>
<div class="t" id="t100" style="top:669.34px;font-size:21.01px;color:#252423;font-weight:normal;font-family:'Liberation Sans', sans-serif;font-style:normal;-webkit-text-stroke:1.1px currentColor;left:68.96px;transform:scaleX(1.0431);transform-origin:0 50%;">Furniture</div>
<svg class="a" style="left:43px;top:669.8px;" width="15" height="15.0" viewBox="0 0 15 15.0" fill="none"><rect x="0.75" y="0.75" width="13.5" height="13.5" stroke="#605e5c" stroke-width="1.5"/><line x1="3.5" y1="7.5" x2="11.5" y2="7.5" stroke="#605e5c" stroke-width="1.5"/></svg>
<div class="t" id="t101" style="top:670.70px;font-size:21.30px;color:#252423;font-weight:bold;font-family:'Liberation Mono', monospace;font-style:normal;left:253.68px;transform:scaleX(0.9240);transform-origin:0 50%;">22.47</div>
<div class="t" id="t102" style="top:670.70px;font-size:21.30px;color:#252423;font-weight:bold;font-family:'Liberation Mono', monospace;font-style:normal;left:399.20px;transform:scaleX(0.9094);transform-origin:0 50%;">38.92</div>
<div class="t" id="t103" style="top:670.70px;font-size:21.30px;color:#252423;font-weight:bold;font-family:'Liberation Mono', monospace;font-style:normal;left:542.68px;transform:scaleX(0.9240);transform-origin:0 50%;">17.51</div>
<div class="t" id="t104" style="top:670.70px;font-size:21.30px;color:#252423;font-weight:bold;font-family:'Liberation Mono', monospace;font-style:normal;left:687.18px;transform:scaleX(0.9240);transform-origin:0 50%;">57.21</div>
<div class="t" id="t105" style="top:670.70px;font-size:21.30px;color:#252423;font-weight:bold;font-family:'Liberation Mono', monospace;font-style:normal;left:831.69px;transform:scaleX(0.9094);transform-origin:0 50%;">25.74</div>
<div class="t" id="t106" style="top:670.70px;font-size:21.30px;color:#252423;font-weight:bold;font-family:'Liberation Mono', monospace;font-style:normal;left:976.48px;transform:scaleX(0.9240);transform-origin:0 50%;">69.33</div>
<div class="t" id="t107" style="top:670.70px;font-size:21.30px;color:#252423;font-weight:bold;font-family:'Liberation Mono', monospace;font-style:normal;left:1122.00px;transform:scaleX(0.9094);transform-origin:0 50%;">31.20</div>
<div class="t" id="t108" style="top:670.70px;font-size:21.30px;color:#252423;font-weight:bold;font-family:'Liberation Mono', monospace;font-style:normal;left:1265.68px;transform:scaleX(0.9240);transform-origin:0 50%;">17.59</div>
<div class="t" id="t109" style="top:670.70px;font-size:21.30px;color:#252423;font-weight:bold;font-family:'Liberation Mono', monospace;font-style:normal;left:1410.28px;transform:scaleX(0.9240);transform-origin:0 50%;">16.80</div>
<div class="t" id="t110" style="top:670.70px;font-size:21.30px;color:#252423;font-weight:bold;font-family:'Liberation Mono', monospace;font-style:normal;left:1554.89px;transform:scaleX(0.9094);transform-origin:0 50%;">15.54</div>
<div class="t" id="t111" style="top:670.70px;font-size:21.30px;color:#252423;font-weight:bold;font-family:'Liberation Mono', monospace;font-style:normal;left:1654.48px;transform:scaleX(0.9044);transform-origin:0 50%;">3/31/2025</div>
<div class="t" id="t112" style="top:701.54px;font-size:21.01px;color:#323130;font-weight:normal;font-family:'Liberation Sans', sans-serif;font-style:normal;left:78.06px;transform:scaleX(0.9435);transform-origin:0 50%;">Bookcases</div>
<div class="t" id="t113" style="top:702.90px;font-size:21.30px;color:#323130;font-weight:normal;font-family:'Liberation Mono', monospace;font-style:normal;left:265.15px;transform:scaleX(0.9307);transform-origin:0 50%;">2.07</div>
<div class="t" id="t114" style="top:702.90px;font-size:21.30px;color:#323130;font-weight:normal;font-family:'Liberation Mono', monospace;font-style:normal;left:409.75px;transform:scaleX(0.9307);transform-origin:0 50%;">9.16</div>
<div class="t" id="t115" style="top:702.90px;font-size:21.30px;color:#323130;font-weight:normal;font-family:'Liberation Mono', monospace;font-style:normal;left:554.15px;transform:scaleX(0.9307);transform-origin:0 50%;">4.12</div>
<div class="t" id="t116" style="top:702.90px;font-size:21.30px;color:#323130;font-weight:normal;font-family:'Liberation Mono', monospace;font-style:normal;left:698.65px;transform:scaleX(0.9307);transform-origin:0 50%;">8.47</div>
<div class="t" id="t117" style="top:702.90px;font-size:21.30px;color:#323130;font-weight:normal;font-family:'Liberation Mono', monospace;font-style:normal;left:843.15px;transform:scaleX(0.9307);transform-origin:0 50%;">3.81</div>
<div class="t" id="t118" style="top:702.90px;font-size:21.30px;color:#323130;font-weight:normal;font-family:'Liberation Mono', monospace;font-style:normal;left:987.95px;transform:scaleX(0.9307);transform-origin:0 50%;">7.79</div>
<div class="t" id="t119" style="top:702.90px;font-size:21.30px;color:#323130;font-weight:normal;font-family:'Liberation Mono', monospace;font-style:normal;left:1132.55px;transform:scaleX(0.9307);transform-origin:0 50%;">3.51</div>
<div class="t" id="t120" style="top:702.90px;font-size:21.30px;color:#323130;font-weight:normal;font-family:'Liberation Mono', monospace;font-style:normal;left:1277.15px;transform:scaleX(0.9307);transform-origin:0 50%;">1.24</div>
<div class="t" id="t121" style="top:702.90px;font-size:21.30px;color:#323130;font-weight:normal;font-family:'Liberation Mono', monospace;font-style:normal;left:1421.75px;transform:scaleX(0.9307);transform-origin:0 50%;">1.22</div>
<div class="t" id="t122" style="top:702.90px;font-size:21.30px;color:#323130;font-weight:normal;font-family:'Liberation Mono', monospace;font-style:normal;left:1566.35px;transform:scaleX(0.9307);transform-origin:0 50%;">2.15</div>
<div class="t" id="t123" style="top:702.90px;font-size:21.30px;color:#323130;font-weight:normal;font-family:'Liberation Mono', monospace;font-style:normal;left:1653.57px;transform:scaleX(0.9124);transform-origin:0 50%;">3/31/2025</div>
<div class="t" id="t124" style="top:733.94px;font-size:21.01px;color:#323130;font-weight:normal;font-family:'Liberation Sans', sans-serif;font-style:normal;left:78.02px;transform:scaleX(0.9800);transform-origin:0 50%;">Chairs</div>
<div class="t" id="t125" style="top:735.30px;font-size:21.30px;color:#323130;font-weight:normal;font-family:'Liberation Mono', monospace;font-style:normal;left:253.68px;transform:scaleX(0.9240);transform-origin:0 50%;">10.78</div>
<div class="t" id="t126" style="top:735.30px;font-size:21.30px;color:#323130;font-weight:normal;font-family:'Liberation Mono', monospace;font-style:normal;left:398.28px;transform:scaleX(0.9240);transform-origin:0 50%;">14.03</div>
<div class="t" id="t127" style="top:735.30px;font-size:21.30px;color:#323130;font-weight:normal;font-family:'Liberation Mono', monospace;font-style:normal;left:554.15px;transform:scaleX(0.9307);transform-origin:0 50%;">6.31</div>
<div class="t" id="t128" style="top:735.30px;font-size:21.30px;color:#323130;font-weight:normal;font-family:'Liberation Mono', monospace;font-style:normal;left:687.18px;transform:scaleX(0.9240);transform-origin:0 50%;">28.16</div>
<div class="t" id="t129" style="top:735.30px;font-size:21.30px;color:#323130;font-weight:normal;font-family:'Liberation Mono', monospace;font-style:normal;left:831.68px;transform:scaleX(0.9240);transform-origin:0 50%;">12.67</div>
<div class="t" id="t130" style="top:735.30px;font-size:21.30px;color:#323130;font-weight:normal;font-family:'Liberation Mono', monospace;font-style:normal;left:976.48px;transform:scaleX(0.9240);transform-origin:0 50%;">29.40</div>
<div class="t" id="t131" style="top:735.30px;font-size:21.30px;color:#323130;font-weight:normal;font-family:'Liberation Mono', monospace;font-style:normal;left:1121.08px;transform:scaleX(0.9240);transform-origin:0 50%;">13.23</div>
<div class="t" id="t132" style="top:735.30px;font-size:21.30px;color:#323130;font-weight:normal;font-family:'Liberation Mono', monospace;font-style:normal;left:1277.15px;transform:scaleX(0.9307);transform-origin:0 50%;">9.87</div>
<div class="t" id="t133" style="top:735.30px;font-size:21.30px;color:#323130;font-weight:normal;font-family:'Liberation Mono', monospace;font-style:normal;left:1421.75px;transform:scaleX(0.9307);transform-origin:0 50%;">7.99</div>
<div class="t" id="t134" style="top:735.30px;font-size:21.30px;color:#323130;font-weight:normal;font-family:'Liberation Mono', monospace;font-style:normal;left:1566.35px;transform:scaleX(0.9307);transform-origin:0 50%;">6.10</div>
<div class="t" id="t135" style="top:735.30px;font-size:21.30px;color:#323130;font-weight:normal;font-family:'Liberation Mono', monospace;font-style:normal;left:1653.57px;transform:scaleX(0.9124);transform-origin:0 50%;">3/31/2025</div>
<div class="t" id="t136" style="top:766.29px;font-size:21.01px;color:#323130;font-weight:normal;font-family:'Liberation Sans', sans-serif;font-style:normal;left:78.02px;transform:scaleX(0.9753);transform-origin:0 50%;">Furnishings</div>
<div class="t" id="t137" style="top:767.65px;font-size:21.30px;color:#323130;font-weight:normal;font-family:'Liberation Mono', monospace;font-style:normal;left:265.15px;transform:scaleX(0.9307);transform-origin:0 50%;">2.76</div>
<div class="t" id="t138" style="top:767.65px;font-size:21.30px;color:#323130;font-weight:normal;font-family:'Liberation Mono', monospace;font-style:normal;left:409.75px;transform:scaleX(0.9307);transform-origin:0 50%;">5.67</div>
<div class="t" id="t139" style="top:767.65px;font-size:21.30px;color:#323130;font-weight:normal;font-family:'Liberation Mono', monospace;font-style:normal;left:554.15px;transform:scaleX(0.9307);transform-origin:0 50%;">2.55</div>
<div class="t" id="t140" style="top:767.65px;font-size:21.30px;color:#323130;font-weight:normal;font-family:'Liberation Mono', monospace;font-style:normal;left:698.65px;transform:scaleX(0.9307);transform-origin:0 50%;">7.22</div>
<div class="t" id="t141" style="top:767.65px;font-size:21.30px;color:#323130;font-weight:normal;font-family:'Liberation Mono', monospace;font-style:normal;left:843.15px;transform:scaleX(0.9307);transform-origin:0 50%;">3.25</div>
<div class="t" id="t142" style="top:767.65px;font-size:21.30px;color:#323130;font-weight:normal;font-family:'Liberation Mono', monospace;font-style:normal;left:987.95px;transform:scaleX(0.9307);transform-origin:0 50%;">9.89</div>
<div class="t" id="t143" style="top:767.65px;font-size:21.30px;color:#323130;font-weight:normal;font-family:'Liberation Mono', monospace;font-style:normal;left:1132.55px;transform:scaleX(0.9307);transform-origin:0 50%;">4.45</div>
<div class="t" id="t144" style="top:767.65px;font-size:21.30px;color:#323130;font-weight:normal;font-family:'Liberation Mono', monospace;font-style:normal;left:1277.15px;transform:scaleX(0.9307);transform-origin:0 50%;">1.92</div>
<div class="t" id="t145" style="top:767.65px;font-size:21.30px;color:#323130;font-weight:normal;font-family:'Liberation Mono', monospace;font-style:normal;left:1421.75px;transform:scaleX(0.9307);transform-origin:0 50%;">2.14</div>
<div class="t" id="t146" style="top:767.65px;font-size:21.30px;color:#323130;font-weight:normal;font-family:'Liberation Mono', monospace;font-style:normal;left:1566.35px;transform:scaleX(0.9307);transform-origin:0 50%;">2.07</div>
<div class="t" id="t147" style="top:767.65px;font-size:21.30px;color:#323130;font-weight:normal;font-family:'Liberation Mono', monospace;font-style:normal;left:1653.57px;transform:scaleX(0.9124);transform-origin:0 50%;">3/31/2025</div>
<div class="t" id="t148" style="top:798.64px;font-size:21.01px;color:#323130;font-weight:normal;font-family:'Liberation Sans', sans-serif;font-style:normal;left:79.00px;transform:scaleX(0.9634);transform-origin:0 50%;">Tables</div>
<div class="t" id="t149" style="top:800.00px;font-size:21.30px;color:#323130;font-weight:normal;font-family:'Liberation Mono', monospace;font-style:normal;left:265.15px;transform:scaleX(0.9307);transform-origin:0 50%;">6.85</div>
<div class="t" id="t150" style="top:800.00px;font-size:21.30px;color:#323130;font-weight:normal;font-family:'Liberation Mono', monospace;font-style:normal;left:398.28px;transform:scaleX(0.9240);transform-origin:0 50%;">10.06</div>
<div class="t" id="t151" style="top:800.00px;font-size:21.30px;color:#323130;font-weight:normal;font-family:'Liberation Mono', monospace;font-style:normal;left:554.15px;transform:scaleX(0.9307);transform-origin:0 50%;">4.53</div>
<div class="t" id="t152" style="top:800.00px;font-size:21.30px;color:#323130;font-weight:normal;font-family:'Liberation Mono', monospace;font-style:normal;left:687.18px;transform:scaleX(0.9240);transform-origin:0 50%;">13.36</div>
<div class="t" id="t153" style="top:800.00px;font-size:21.30px;color:#323130;font-weight:normal;font-family:'Liberation Mono', monospace;font-style:normal;left:843.15px;transform:scaleX(0.9307);transform-origin:0 50%;">6.01</div>
<div class="t" id="t154" style="top:800.00px;font-size:21.30px;color:#323130;font-weight:normal;font-family:'Liberation Mono', monospace;font-style:normal;left:976.48px;transform:scaleX(0.9240);transform-origin:0 50%;">22.24</div>
<div class="t" id="t155" style="top:800.00px;font-size:21.30px;color:#323130;font-weight:normal;font-family:'Liberation Mono', monospace;font-style:normal;left:1121.08px;transform:scaleX(0.9240);transform-origin:0 50%;">10.01</div>
<div class="t" id="t156" style="top:800.00px;font-size:21.30px;color:#323130;font-weight:normal;font-family:'Liberation Mono', monospace;font-style:normal;left:1277.15px;transform:scaleX(0.9307);transform-origin:0 50%;">4.56</div>
<div class="t" id="t157" style="top:800.00px;font-size:21.30px;color:#323130;font-weight:normal;font-family:'Liberation Mono', monospace;font-style:normal;left:1421.75px;transform:scaleX(0.9307);transform-origin:0 50%;">5.45</div>
<div class="t" id="t158" style="top:800.00px;font-size:21.30px;color:#323130;font-weight:normal;font-family:'Liberation Mono', monospace;font-style:normal;left:1566.35px;transform:scaleX(0.9307);transform-origin:0 50%;">5.22</div>
<div class="t" id="t159" style="top:800.00px;font-size:21.30px;color:#323130;font-weight:normal;font-family:'Liberation Mono', monospace;font-style:normal;left:1653.57px;transform:scaleX(0.9124);transform-origin:0 50%;">3/31/2025</div>
<div class="t" id="t160" style="top:833.34px;font-size:21.01px;color:#252423;font-weight:normal;font-family:'Liberation Sans', sans-serif;font-style:normal;-webkit-text-stroke:1.1px currentColor;left:68.97px;transform:scaleX(1.0297);transform-origin:0 50%;">Office Supplies</div>
<svg class="a" style="left:43px;top:833.8px;" width="15" height="15.0" viewBox="0 0 15 15.0" fill="none"><rect x="0.75" y="0.75" width="13.5" height="13.5" stroke="#605e5c" stroke-width="1.5"/><line x1="3.5" y1="7.5" x2="11.5" y2="7.5" stroke="#605e5c" stroke-width="1.5"/></svg>
<div class="t" id="t161" style="top:834.70px;font-size:21.30px;color:#252423;font-weight:bold;font-family:'Liberation Mono', monospace;font-style:normal;left:253.68px;transform:scaleX(0.9240);transform-origin:0 50%;">25.75</div>
<div class="t" id="t162" style="top:834.70px;font-size:21.30px;color:#252423;font-weight:bold;font-family:'Liberation Mono', monospace;font-style:normal;left:399.20px;transform:scaleX(0.9094);transform-origin:0 50%;">39.50</div>
<div class="t" id="t163" style="top:834.70px;font-size:21.30px;color:#252423;font-weight:bold;font-family:'Liberation Mono', monospace;font-style:normal;left:542.68px;transform:scaleX(0.9240);transform-origin:0 50%;">17.78</div>
<div class="t" id="t164" style="top:834.70px;font-size:21.30px;color:#252423;font-weight:bold;font-family:'Liberation Mono', monospace;font-style:normal;left:687.18px;transform:scaleX(0.9240);transform-origin:0 50%;">78.32</div>
<div class="t" id="t165" style="top:834.70px;font-size:21.30px;color:#252423;font-weight:bold;font-family:'Liberation Mono', monospace;font-style:normal;left:832.60px;transform:scaleX(0.8952);transform-origin:0 50%;">35.24</div>
<div class="t" id="t166" style="top:834.70px;font-size:21.30px;color:#252423;font-weight:bold;font-family:'Liberation Mono', monospace;font-style:normal;left:976.48px;transform:scaleX(0.9240);transform-origin:0 50%;">71.05</div>
<div class="t" id="t167" style="top:834.70px;font-size:21.30px;color:#252423;font-weight:bold;font-family:'Liberation Mono', monospace;font-style:normal;left:1122.00px;transform:scaleX(0.9094);transform-origin:0 50%;">31.97</div>
<div class="t" id="t168" style="top:834.70px;font-size:21.30px;color:#252423;font-weight:bold;font-family:'Liberation Mono', monospace;font-style:normal;left:1265.68px;transform:scaleX(0.9240);transform-origin:0 50%;">23.97</div>
<div class="t" id="t169" style="top:834.70px;font-size:21.30px;color:#252423;font-weight:bold;font-family:'Liberation Mono', monospace;font-style:normal;left:1410.28px;transform:scaleX(0.9240);transform-origin:0 50%;">14.73</div>
<div class="t" id="t170" style="top:834.70px;font-size:21.30px;color:#252423;font-weight:bold;font-family:'Liberation Mono', monospace;font-style:normal;left:1554.88px;transform:scaleX(0.9240);transform-origin:0 50%;">18.53</div>
<div class="t" id="t171" style="top:834.70px;font-size:21.30px;color:#252423;font-weight:bold;font-family:'Liberation Mono', monospace;font-style:normal;left:1654.48px;transform:scaleX(0.9044);transform-origin:0 50%;">3/31/2025</div>
<div class="t" id="t172" style="top:865.04px;font-size:21.01px;color:#323130;font-weight:normal;font-family:'Liberation Sans', sans-serif;font-style:normal;left:79.00px;transform:scaleX(0.9928);transform-origin:0 50%;">Appliances</div>
<div class="t" id="t173" style="top:866.40px;font-size:21.30px;color:#323130;font-weight:normal;font-family:'Liberation Mono', monospace;font-style:normal;left:265.15px;transform:scaleX(0.9307);transform-origin:0 50%;">4.52</div>
<div class="t" id="t174" style="top:866.40px;font-size:21.30px;color:#323130;font-weight:normal;font-family:'Liberation Mono', monospace;font-style:normal;left:409.75px;transform:scaleX(0.9307);transform-origin:0 50%;">6.60</div>
<div class="t" id="t175" style="top:866.40px;font-size:21.30px;color:#323130;font-weight:normal;font-family:'Liberation Mono', monospace;font-style:normal;left:554.15px;transform:scaleX(0.9307);transform-origin:0 50%;">2.97</div>
<div class="t" id="t176" style="top:866.40px;font-size:21.30px;color:#323130;font-weight:normal;font-family:'Liberation Mono', monospace;font-style:normal;left:687.18px;transform:scaleX(0.9240);transform-origin:0 50%;">12.31</div>
<div class="t" id="t177" style="top:866.40px;font-size:21.30px;color:#323130;font-weight:normal;font-family:'Liberation Mono', monospace;font-style:normal;left:843.15px;transform:scaleX(0.9307);transform-origin:0 50%;">5.54</div>
<div class="t" id="t178" style="top:866.40px;font-size:21.30px;color:#323130;font-weight:normal;font-family:'Liberation Mono', monospace;font-style:normal;left:976.48px;transform:scaleX(0.9240);transform-origin:0 50%;">13.97</div>
<div class="t" id="t179" style="top:866.40px;font-size:21.30px;color:#323130;font-weight:normal;font-family:'Liberation Mono', monospace;font-style:normal;left:1132.55px;transform:scaleX(0.9307);transform-origin:0 50%;">6.29</div>
<div class="t" id="t180" style="top:866.40px;font-size:21.30px;color:#323130;font-weight:normal;font-family:'Liberation Mono', monospace;font-style:normal;left:1277.15px;transform:scaleX(0.9307);transform-origin:0 50%;">5.57</div>
<div class="t" id="t181" style="top:866.40px;font-size:21.30px;color:#323130;font-weight:normal;font-family:'Liberation Mono', monospace;font-style:normal;left:1421.75px;transform:scaleX(0.9307);transform-origin:0 50%;">2.87</div>
<div class="t" id="t182" style="top:866.40px;font-size:21.30px;color:#323130;font-weight:normal;font-family:'Liberation Mono', monospace;font-style:normal;left:1566.35px;transform:scaleX(0.9307);transform-origin:0 50%;">1.61</div>
<div class="t" id="t183" style="top:866.40px;font-size:21.30px;color:#323130;font-weight:normal;font-family:'Liberation Mono', monospace;font-style:normal;left:1653.57px;transform:scaleX(0.9124);transform-origin:0 50%;">3/31/2025</div>
<div class="t" id="t184" style="top:897.44px;font-size:21.01px;color:#323130;font-weight:normal;font-family:'Liberation Sans', sans-serif;font-style:normal;left:79.00px;transform:scaleX(1.0519);transform-origin:0 50%;">Art</div>
<div class="t" id="t185" style="top:898.80px;font-size:21.30px;color:#323130;font-weight:normal;font-family:'Liberation Mono', monospace;font-style:normal;left:265.15px;transform:scaleX(0.9307);transform-origin:0 50%;">0.84</div>
<div class="t" id="t186" style="top:898.80px;font-size:21.30px;color:#323130;font-weight:normal;font-family:'Liberation Mono', monospace;font-style:normal;left:409.75px;transform:scaleX(0.9307);transform-origin:0 50%;">2.34</div>
<div class="t" id="t187" style="top:898.80px;font-size:21.30px;color:#323130;font-weight:normal;font-family:'Liberation Mono', monospace;font-style:normal;left:554.15px;transform:scaleX(0.9307);transform-origin:0 50%;">1.05</div>
<div class="t" id="t188" style="top:898.80px;font-size:21.30px;color:#323130;font-weight:normal;font-family:'Liberation Mono', monospace;font-style:normal;left:698.65px;transform:scaleX(0.9307);transform-origin:0 50%;">2.13</div>
<div class="t" id="t189" style="top:898.80px;font-size:21.30px;color:#323130;font-weight:normal;font-family:'Liberation Mono', monospace;font-style:normal;left:843.15px;transform:scaleX(0.9307);transform-origin:0 50%;">0.96</div>
<div class="t" id="t190" style="top:898.80px;font-size:21.30px;color:#323130;font-weight:normal;font-family:'Liberation Mono', monospace;font-style:normal;left:987.95px;transform:scaleX(0.9307);transform-origin:0 50%;">2.52</div>
<div class="t" id="t191" style="top:898.80px;font-size:21.30px;color:#323130;font-weight:normal;font-family:'Liberation Mono', monospace;font-style:normal;left:1132.55px;transform:scaleX(0.9307);transform-origin:0 50%;">1.13</div>
<div class="t" id="t192" style="top:898.80px;font-size:21.30px;color:#323130;font-weight:normal;font-family:'Liberation Mono', monospace;font-style:normal;left:1277.15px;transform:scaleX(0.9307);transform-origin:0 50%;">0.41</div>
<div class="t" id="t193" style="top:898.80px;font-size:21.30px;color:#323130;font-weight:normal;font-family:'Liberation Mono', monospace;font-style:normal;left:1421.75px;transform:scaleX(0.9307);transform-origin:0 50%;">1.03</div>
<div class="t" id="t194" style="top:898.80px;font-size:21.30px;color:#323130;font-weight:normal;font-family:'Liberation Mono', monospace;font-style:normal;left:1566.35px;transform:scaleX(0.9307);transform-origin:0 50%;">0.43</div>
<div class="t" id="t195" style="top:898.80px;font-size:21.30px;color:#323130;font-weight:normal;font-family:'Liberation Mono', monospace;font-style:normal;left:1653.57px;transform:scaleX(0.9124);transform-origin:0 50%;">3/31/2025</div>
<div class="t" id="t196" style="top:929.84px;font-size:21.01px;color:#323130;font-weight:normal;font-family:'Liberation Sans', sans-serif;font-style:normal;left:78.01px;transform:scaleX(0.9885);transform-origin:0 50%;">Binders</div>
<div class="t" id="t197" style="top:931.20px;font-size:21.30px;color:#323130;font-weight:normal;font-family:'Liberation Mono', monospace;font-style:normal;left:265.15px;transform:scaleX(0.9307);transform-origin:0 50%;">7.19</div>
<div class="t" id="t198" style="top:931.20px;font-size:21.30px;color:#323130;font-weight:normal;font-family:'Liberation Mono', monospace;font-style:normal;left:409.75px;transform:scaleX(0.9307);transform-origin:0 50%;">8.43</div>
<div class="t" id="t199" style="top:931.20px;font-size:21.30px;color:#323130;font-weight:normal;font-family:'Liberation Mono', monospace;font-style:normal;left:554.15px;transform:scaleX(0.9307);transform-origin:0 50%;">3.79</div>
<div class="t" id="t200" style="top:931.20px;font-size:21.30px;color:#323130;font-weight:normal;font-family:'Liberation Mono', monospace;font-style:normal;left:687.18px;transform:scaleX(0.9240);transform-origin:0 50%;">28.23</div>
<div class="t" id="t201" style="top:931.20px;font-size:21.30px;color:#323130;font-weight:normal;font-family:'Liberation Mono', monospace;font-style:normal;left:831.68px;transform:scaleX(0.9240);transform-origin:0 50%;">12.70</div>
<div class="t" id="t202" style="top:931.20px;font-size:21.30px;color:#323130;font-weight:normal;font-family:'Liberation Mono', monospace;font-style:normal;left:976.48px;transform:scaleX(0.9240);transform-origin:0 50%;">20.15</div>
<div class="t" id="t203" style="top:931.20px;font-size:21.30px;color:#323130;font-weight:normal;font-family:'Liberation Mono', monospace;font-style:normal;left:1132.55px;transform:scaleX(0.9307);transform-origin:0 50%;">9.07</div>
<div class="t" id="t204" style="top:931.20px;font-size:21.30px;color:#323130;font-weight:normal;font-family:'Liberation Mono', monospace;font-style:normal;left:1277.15px;transform:scaleX(0.9307);transform-origin:0 50%;">6.99</div>
<div class="t" id="t205" style="top:931.20px;font-size:21.30px;color:#323130;font-weight:normal;font-family:'Liberation Mono', monospace;font-style:normal;left:1421.75px;transform:scaleX(0.9307);transform-origin:0 50%;">3.72</div>
<div class="t" id="t206" style="top:931.20px;font-size:21.30px;color:#323130;font-weight:normal;font-family:'Liberation Mono', monospace;font-style:normal;left:1566.35px;transform:scaleX(0.9307);transform-origin:0 50%;">5.27</div>
<div class="t" id="t207" style="top:931.20px;font-size:21.30px;color:#323130;font-weight:normal;font-family:'Liberation Mono', monospace;font-style:normal;left:1653.57px;transform:scaleX(0.9124);transform-origin:0 50%;">3/31/2025</div>
<div class="t" id="t208" style="top:962.19px;font-size:21.01px;color:#323130;font-weight:normal;font-family:'Liberation Sans', sans-serif;font-style:normal;left:78.02px;transform:scaleX(0.9796);transform-origin:0 50%;">Envelopes</div>
<div class="t" id="t209" style="top:963.55px;font-size:21.30px;color:#323130;font-weight:normal;font-family:'Liberation Mono', monospace;font-style:normal;left:265.15px;transform:scaleX(0.9307);transform-origin:0 50%;">0.48</div>
<div class="t" id="t210" style="top:963.55px;font-size:21.30px;color:#323130;font-weight:normal;font-family:'Liberation Mono', monospace;font-style:normal;left:409.75px;transform:scaleX(0.9307);transform-origin:0 50%;">0.52</div>
<div class="t" id="t211" style="top:963.55px;font-size:21.30px;color:#323130;font-weight:normal;font-family:'Liberation Mono', monospace;font-style:normal;left:554.15px;transform:scaleX(0.9307);transform-origin:0 50%;">0.24</div>
<div class="t" id="t212" style="top:963.55px;font-size:21.30px;color:#323130;font-weight:normal;font-family:'Liberation Mono', monospace;font-style:normal;left:698.65px;transform:scaleX(0.9307);transform-origin:0 50%;">0.59</div>
<div class="t" id="t213" style="top:963.55px;font-size:21.30px;color:#323130;font-weight:normal;font-family:'Liberation Mono', monospace;font-style:normal;left:843.15px;transform:scaleX(0.9307);transform-origin:0 50%;">0.26</div>
<div class="t" id="t214" style="top:963.55px;font-size:21.30px;color:#323130;font-weight:normal;font-family:'Liberation Mono', monospace;font-style:normal;left:987.95px;transform:scaleX(0.9307);transform-origin:0 50%;">1.20</div>
<div class="t" id="t215" style="top:963.55px;font-size:21.30px;color:#323130;font-weight:normal;font-family:'Liberation Mono', monospace;font-style:normal;left:1132.55px;transform:scaleX(0.9307);transform-origin:0 50%;">0.54</div>
<div class="t" id="t216" style="top:963.55px;font-size:21.30px;color:#323130;font-weight:normal;font-family:'Liberation Mono', monospace;font-style:normal;left:1277.15px;transform:scaleX(0.9307);transform-origin:0 50%;">0.44</div>
<div class="t" id="t217" style="top:963.55px;font-size:21.30px;color:#323130;font-weight:normal;font-family:'Liberation Mono', monospace;font-style:normal;left:1421.75px;transform:scaleX(0.9307);transform-origin:0 50%;">0.20</div>
<div class="t" id="t218" style="top:963.55px;font-size:21.30px;color:#323130;font-weight:normal;font-family:'Liberation Mono', monospace;font-style:normal;left:1566.35px;transform:scaleX(0.9307);transform-origin:0 50%;">0.43</div>
<div class="t" id="t219" style="top:963.55px;font-size:21.30px;color:#323130;font-weight:normal;font-family:'Liberation Mono', monospace;font-style:normal;left:1653.57px;transform:scaleX(0.9124);transform-origin:0 50%;">3/31/2025</div>
<div class="t" id="t220" style="top:994.54px;font-size:21.01px;color:#323130;font-weight:normal;font-family:'Liberation Sans', sans-serif;font-style:normal;left:78.05px;transform:scaleX(0.9546);transform-origin:0 50%;">Fasteners</div>
<div class="t" id="t221" style="top:995.90px;font-size:21.30px;color:#323130;font-weight:normal;font-family:'Liberation Mono', monospace;font-style:normal;left:265.15px;transform:scaleX(0.9307);transform-origin:0 50%;">0.10</div>
<div class="t" id="t222" style="top:995.90px;font-size:21.30px;color:#323130;font-weight:normal;font-family:'Liberation Mono', monospace;font-style:normal;left:409.75px;transform:scaleX(0.9307);transform-origin:0 50%;">0.11</div>
<div class="t" id="t223" style="top:995.90px;font-size:21.30px;color:#323130;font-weight:normal;font-family:'Liberation Mono', monospace;font-style:normal;left:554.15px;transform:scaleX(0.9307);transform-origin:0 50%;">0.05</div>
<div class="t" id="t224" style="top:995.90px;font-size:21.30px;color:#323130;font-weight:normal;font-family:'Liberation Mono', monospace;font-style:normal;left:698.65px;transform:scaleX(0.9307);transform-origin:0 50%;">0.22</div>
<div class="t" id="t225" style="top:995.90px;font-size:21.30px;color:#323130;font-weight:normal;font-family:'Liberation Mono', monospace;font-style:normal;left:843.15px;transform:scaleX(0.9307);transform-origin:0 50%;">0.10</div>
<div class="t" id="t226" style="top:995.90px;font-size:21.30px;color:#323130;font-weight:normal;font-family:'Liberation Mono', monospace;font-style:normal;left:987.95px;transform:scaleX(0.9307);transform-origin:0 50%;">0.30</div>
<div class="t" id="t227" style="top:995.90px;font-size:21.30px;color:#323130;font-weight:normal;font-family:'Liberation Mono', monospace;font-style:normal;left:1132.55px;transform:scaleX(0.9307);transform-origin:0 50%;">0.14</div>
<div class="t" id="t228" style="top:995.90px;font-size:21.30px;color:#323130;font-weight:normal;font-family:'Liberation Mono', monospace;font-style:normal;left:1277.15px;transform:scaleX(0.9307);transform-origin:0 50%;">0.09</div>
<div class="t" id="t229" style="top:995.90px;font-size:21.30px;color:#323130;font-weight:normal;font-family:'Liberation Mono', monospace;font-style:normal;left:1421.75px;transform:scaleX(0.9307);transform-origin:0 50%;">0.12</div>
<div class="t" id="t230" style="top:995.90px;font-size:21.30px;color:#323130;font-weight:normal;font-family:'Liberation Mono', monospace;font-style:normal;left:1566.35px;transform:scaleX(0.9307);transform-origin:0 50%;">0.02</div>
<div class="t" id="t231" style="top:995.90px;font-size:21.30px;color:#323130;font-weight:normal;font-family:'Liberation Mono', monospace;font-style:normal;left:1653.57px;transform:scaleX(0.9124);transform-origin:0 50%;">3/31/2025</div>
<div class="t" id="t232" style="top:1026.94px;font-size:21.01px;color:#323130;font-weight:normal;font-family:'Liberation Sans', sans-serif;font-style:normal;left:78.03px;transform:scaleX(0.9688);transform-origin:0 50%;">Labels</div>
<div class="t" id="t233" style="top:1028.30px;font-size:21.30px;color:#323130;font-weight:normal;font-family:'Liberation Mono', monospace;font-style:normal;left:265.15px;transform:scaleX(0.9307);transform-origin:0 50%;">0.16</div>
<div class="t" id="t234" style="top:1028.30px;font-size:21.30px;color:#323130;font-weight:normal;font-family:'Liberation Mono', monospace;font-style:normal;left:409.75px;transform:scaleX(0.9307);transform-origin:0 50%;">0.90</div>
<div class="t" id="t235" style="top:1028.30px;font-size:21.30px;color:#323130;font-weight:normal;font-family:'Liberation Mono', monospace;font-style:normal;left:554.15px;transform:scaleX(0.9307);transform-origin:0 50%;">0.40</div>
<div class="t" id="t236" style="top:1028.30px;font-size:21.30px;color:#323130;font-weight:normal;font-family:'Liberation Mono', monospace;font-style:normal;left:698.65px;transform:scaleX(0.9307);transform-origin:0 50%;">1.85</div>
<div class="t" id="t237" style="top:1028.30px;font-size:21.30px;color:#323130;font-weight:normal;font-family:'Liberation Mono', monospace;font-style:normal;left:843.15px;transform:scaleX(0.9307);transform-origin:0 50%;">0.83</div>
<div class="t" id="t238" style="top:1028.30px;font-size:21.30px;color:#323130;font-weight:normal;font-family:'Liberation Mono', monospace;font-style:normal;left:987.95px;transform:scaleX(0.9307);transform-origin:0 50%;">0.77</div>
<div class="t" id="t239" style="top:1028.30px;font-size:21.30px;color:#323130;font-weight:normal;font-family:'Liberation Mono', monospace;font-style:normal;left:1132.55px;transform:scaleX(0.9307);transform-origin:0 50%;">0.35</div>
<div class="t" id="t240" style="top:1028.30px;font-size:21.30px;color:#323130;font-weight:normal;font-family:'Liberation Mono', monospace;font-style:normal;left:1277.15px;transform:scaleX(0.9307);transform-origin:0 50%;">0.06</div>
<div class="t" id="t241" style="top:1028.30px;font-size:21.30px;color:#323130;font-weight:normal;font-family:'Liberation Mono', monospace;font-style:normal;left:1421.75px;transform:scaleX(0.9307);transform-origin:0 50%;">0.13</div>
<div class="t" id="t242" style="top:1028.30px;font-size:21.30px;color:#323130;font-weight:normal;font-family:'Liberation Mono', monospace;font-style:normal;left:1566.35px;transform:scaleX(0.9307);transform-origin:0 50%;">0.17</div>
<div class="t" id="t243" style="top:1028.30px;font-size:21.30px;color:#323130;font-weight:normal;font-family:'Liberation Mono', monospace;font-style:normal;left:1653.57px;transform:scaleX(0.9124);transform-origin:0 50%;">3/31/2025</div>
<div class="t" id="t244" style="top:1059.34px;font-size:21.01px;color:#323130;font-weight:normal;font-family:'Liberation Sans', sans-serif;font-style:normal;left:78.04px;transform:scaleX(0.9556);transform-origin:0 50%;">Paper</div>
<div class="t" id="t245" style="top:1060.70px;font-size:21.30px;color:#323130;font-weight:normal;font-family:'Liberation Mono', monospace;font-style:normal;left:265.15px;transform:scaleX(0.9307);transform-origin:0 50%;">3.18</div>
<div class="t" id="t246" style="top:1060.70px;font-size:21.30px;color:#323130;font-weight:normal;font-family:'Liberation Mono', monospace;font-style:normal;left:409.75px;transform:scaleX(0.9307);transform-origin:0 50%;">5.90</div>
<div class="t" id="t247" style="top:1060.70px;font-size:21.30px;color:#323130;font-weight:normal;font-family:'Liberation Mono', monospace;font-style:normal;left:554.15px;transform:scaleX(0.9307);transform-origin:0 50%;">2.65</div>
<div class="t" id="t248" style="top:1060.70px;font-size:21.30px;color:#323130;font-weight:normal;font-family:'Liberation Mono', monospace;font-style:normal;left:698.65px;transform:scaleX(0.9307);transform-origin:0 50%;">7.47</div>
<div class="t" id="t249" style="top:1060.70px;font-size:21.30px;color:#323130;font-weight:normal;font-family:'Liberation Mono', monospace;font-style:normal;left:843.15px;transform:scaleX(0.9307);transform-origin:0 50%;">3.36</div>
<div class="t" id="t250" style="top:1060.70px;font-size:21.30px;color:#323130;font-weight:normal;font-family:'Liberation Mono', monospace;font-style:normal;left:987.95px;transform:scaleX(0.9307);transform-origin:0 50%;">7.25</div>
<div class="t" id="t251" style="top:1060.70px;font-size:21.30px;color:#323130;font-weight:normal;font-family:'Liberation Mono', monospace;font-style:normal;left:1132.55px;transform:scaleX(0.9307);transform-origin:0 50%;">3.26</div>
<div class="t" id="t252" style="top:1060.70px;font-size:21.30px;color:#323130;font-weight:normal;font-family:'Liberation Mono', monospace;font-style:normal;left:1277.15px;transform:scaleX(0.9307);transform-origin:0 50%;">1.55</div>
<div class="t" id="t253" style="top:1060.70px;font-size:21.30px;color:#323130;font-weight:normal;font-family:'Liberation Mono', monospace;font-style:normal;left:1421.75px;transform:scaleX(0.9307);transform-origin:0 50%;">1.45</div>
<div class="t" id="t254" style="top:1060.70px;font-size:21.30px;color:#323130;font-weight:normal;font-family:'Liberation Mono', monospace;font-style:normal;left:1566.35px;transform:scaleX(0.9307);transform-origin:0 50%;">4.08</div>
<div class="t" id="t255" style="top:1060.70px;font-size:21.30px;color:#323130;font-weight:normal;font-family:'Liberation Mono', monospace;font-style:normal;left:1653.57px;transform:scaleX(0.9124);transform-origin:0 50%;">3/31/2025</div>
<div class="t" id="t256" style="top:1091.74px;font-size:21.01px;color:#323130;font-weight:normal;font-family:'Liberation Sans', sans-serif;font-style:normal;left:79.00px;transform:scaleX(0.9537);transform-origin:0 50%;">Storage</div>
<div class="t" id="t257" style="top:1093.10px;font-size:21.30px;color:#323130;font-weight:normal;font-family:'Liberation Mono', monospace;font-style:normal;left:265.15px;transform:scaleX(0.9307);transform-origin:0 50%;">6.38</div>
<div class="t" id="t258" style="top:1093.10px;font-size:21.30px;color:#323130;font-weight:normal;font-family:'Liberation Mono', monospace;font-style:normal;left:398.28px;transform:scaleX(0.9240);transform-origin:0 50%;">13.55</div>
<div class="t" id="t259" style="top:1093.10px;font-size:21.30px;color:#323130;font-weight:normal;font-family:'Liberation Mono', monospace;font-style:normal;left:554.15px;transform:scaleX(0.9307);transform-origin:0 50%;">6.10</div>
<div class="t" id="t260" style="top:1093.10px;font-size:21.30px;color:#323130;font-weight:normal;font-family:'Liberation Mono', monospace;font-style:normal;left:687.18px;transform:scaleX(0.9240);transform-origin:0 50%;">19.94</div>
<div class="t" id="t261" style="top:1093.10px;font-size:21.30px;color:#323130;font-weight:normal;font-family:'Liberation Mono', monospace;font-style:normal;left:843.15px;transform:scaleX(0.9307);transform-origin:0 50%;">8.97</div>
<div class="t" id="t262" style="top:1093.10px;font-size:21.30px;color:#323130;font-weight:normal;font-family:'Liberation Mono', monospace;font-style:normal;left:976.48px;transform:scaleX(0.9240);transform-origin:0 50%;">22.01</div>
<div class="t" id="t263" style="top:1093.10px;font-size:21.30px;color:#323130;font-weight:normal;font-family:'Liberation Mono', monospace;font-style:normal;left:1132.55px;transform:scaleX(0.9307);transform-origin:0 50%;">9.91</div>
<div class="t" id="t264" style="top:1093.10px;font-size:21.30px;color:#323130;font-weight:normal;font-family:'Liberation Mono', monospace;font-style:normal;left:1277.15px;transform:scaleX(0.9307);transform-origin:0 50%;">4.66</div>
<div class="t" id="t265" style="top:1093.10px;font-size:21.30px;color:#323130;font-weight:normal;font-family:'Liberation Mono', monospace;font-style:normal;left:1421.75px;transform:scaleX(0.9307);transform-origin:0 50%;">4.75</div>
<div class="t" id="t266" style="top:1093.10px;font-size:21.30px;color:#323130;font-weight:normal;font-family:'Liberation Mono', monospace;font-style:normal;left:1566.35px;transform:scaleX(0.9307);transform-origin:0 50%;">4.77</div>
<div class="t" id="t267" style="top:1093.10px;font-size:21.30px;color:#323130;font-weight:normal;font-family:'Liberation Mono', monospace;font-style:normal;left:1653.57px;transform:scaleX(0.9124);transform-origin:0 50%;">3/31/2025</div>
<div class="t" id="t268" style="top:1124.09px;font-size:21.01px;color:#323130;font-weight:normal;font-family:'Liberation Sans', sans-serif;font-style:normal;left:79.00px;transform:scaleX(0.9706);transform-origin:0 50%;">Supplies</div>
<div class="t" id="t269" style="top:1125.45px;font-size:21.30px;color:#323130;font-weight:normal;font-family:'Liberation Mono', monospace;font-style:normal;left:265.15px;transform:scaleX(0.9307);transform-origin:0 50%;">2.89</div>
<div class="t" id="t270" style="top:1125.45px;font-size:21.30px;color:#323130;font-weight:normal;font-family:'Liberation Mono', monospace;font-style:normal;left:409.75px;transform:scaleX(0.9307);transform-origin:0 50%;">1.16</div>
<div class="t" id="t271" style="top:1125.45px;font-size:21.30px;color:#323130;font-weight:normal;font-family:'Liberation Mono', monospace;font-style:normal;left:554.15px;transform:scaleX(0.9307);transform-origin:0 50%;">0.52</div>
<div class="t" id="t272" style="top:1125.45px;font-size:21.30px;color:#323130;font-weight:normal;font-family:'Liberation Mono', monospace;font-style:normal;left:698.65px;transform:scaleX(0.9307);transform-origin:0 50%;">5.59</div>
<div class="t" id="t273" style="top:1125.45px;font-size:21.30px;color:#323130;font-weight:normal;font-family:'Liberation Mono', monospace;font-style:normal;left:843.15px;transform:scaleX(0.9307);transform-origin:0 50%;">2.51</div>
<div class="t" id="t274" style="top:1125.45px;font-size:21.30px;color:#323130;font-weight:normal;font-family:'Liberation Mono', monospace;font-style:normal;left:987.95px;transform:scaleX(0.9307);transform-origin:0 50%;">2.87</div>
<div class="t" id="t275" style="top:1125.45px;font-size:21.30px;color:#323130;font-weight:normal;font-family:'Liberation Mono', monospace;font-style:normal;left:1132.55px;transform:scaleX(0.9307);transform-origin:0 50%;">1.29</div>
<div class="t" id="t276" style="top:1125.45px;font-size:21.30px;color:#323130;font-weight:normal;font-family:'Liberation Mono', monospace;font-style:normal;left:1277.15px;transform:scaleX(0.9307);transform-origin:0 50%;">4.21</div>
<div class="t" id="t277" style="top:1125.45px;font-size:21.30px;color:#323130;font-weight:normal;font-family:'Liberation Mono', monospace;font-style:normal;left:1421.75px;transform:scaleX(0.9307);transform-origin:0 50%;">0.46</div>
<div class="t" id="t278" style="top:1125.45px;font-size:21.30px;color:#323130;font-weight:normal;font-family:'Liberation Mono', monospace;font-style:normal;left:1566.35px;transform:scaleX(0.9307);transform-origin:0 50%;">1.76</div>
<div class="t" id="t279" style="top:1125.45px;font-size:21.30px;color:#323130;font-weight:normal;font-family:'Liberation Mono', monospace;font-style:normal;left:1653.57px;transform:scaleX(0.9124);transform-origin:0 50%;">3/31/2025</div>
<div class="t" id="t280" style="top:1159.09px;font-size:21.01px;color:#252423;font-weight:normal;font-family:'Liberation Sans', sans-serif;font-style:normal;-webkit-text-stroke:1.1px currentColor;left:70.00px;transform:scaleX(1.0024);transform-origin:0 50%;">Technology</div>
<svg class="a" style="left:43px;top:1159.5500000000002px;" width="15" height="15.0" viewBox="0 0 15 15.0" fill="none"><rect x="0.75" y="0.75" width="13.5" height="13.5" stroke="#605e5c" stroke-width="1.5"/><line x1="3.5" y1="7.5" x2="11.5" y2="7.5" stroke="#605e5c" stroke-width="1.5"/></svg>
<div class="t" id="t281" style="top:1160.45px;font-size:21.30px;color:#252423;font-weight:bold;font-family:'Liberation Mono', monospace;font-style:normal;left:254.60px;transform:scaleX(0.9094);transform-origin:0 50%;">37.06</div>
<div class="t" id="t282" style="top:1160.45px;font-size:21.30px;color:#252423;font-weight:bold;font-family:'Liberation Mono', monospace;font-style:normal;left:399.20px;transform:scaleX(0.9094);transform-origin:0 50%;">49.27</div>
<div class="t" id="t283" style="top:1160.45px;font-size:21.30px;color:#252423;font-weight:bold;font-family:'Liberation Mono', monospace;font-style:normal;left:542.68px;transform:scaleX(0.9240);transform-origin:0 50%;">22.17</div>
<div class="t" id="t284" style="top:1160.45px;font-size:21.30px;color:#252423;font-weight:bold;font-family:'Liberation Mono', monospace;font-style:normal;left:687.18px;transform:scaleX(0.9240);transform-origin:0 50%;">68.70</div>
<div class="t" id="t285" style="top:1160.45px;font-size:21.30px;color:#252423;font-weight:bold;font-family:'Liberation Mono', monospace;font-style:normal;left:832.60px;transform:scaleX(0.9094);transform-origin:0 50%;">30.91</div>
<div class="t" id="t286" style="top:1160.45px;font-size:21.30px;color:#252423;font-weight:bold;font-family:'Liberation Mono', monospace;font-style:normal;left:976.48px;transform:scaleX(0.9240);transform-origin:0 50%;">71.40</div>
<div class="t" id="t287" style="top:1160.45px;font-size:21.30px;color:#252423;font-weight:bold;font-family:'Liberation Mono', monospace;font-style:normal;left:1122.00px;transform:scaleX(0.9094);transform-origin:0 50%;">32.13</div>
<div class="t" id="t288" style="top:1160.45px;font-size:21.30px;color:#252423;font-weight:bold;font-family:'Liberation Mono', monospace;font-style:normal;left:1265.68px;transform:scaleX(0.9240);transform-origin:0 50%;">23.17</div>
<div class="t" id="t289" style="top:1160.45px;font-size:21.30px;color:#252423;font-weight:bold;font-family:'Liberation Mono', monospace;font-style:normal;left:1410.28px;transform:scaleX(0.9240);transform-origin:0 50%;">18.49</div>
<div class="t" id="t290" style="top:1160.45px;font-size:21.30px;color:#252423;font-weight:bold;font-family:'Liberation Mono', monospace;font-style:normal;left:1555.80px;transform:scaleX(0.9094);transform-origin:0 50%;">40.70</div>
<div class="t" id="t291" style="top:1160.45px;font-size:21.30px;color:#252423;font-weight:bold;font-family:'Liberation Mono', monospace;font-style:normal;left:1654.48px;transform:scaleX(0.9044);transform-origin:0 50%;">3/31/2025</div>
<div class="a" style="left:30px;top:1216px;width:1738px;height:14.5px;background:#f7f7f7;border-radius:8px;box-shadow:inset 0 0 0 1px #eeeeee;"></div>
<div class="a" style="left:220.5px;top:1216.3px;width:1547.5px;height:13.900000000000091px;background:#aaaaaa;border-radius:7px;"></div>
<div class="a" style="left:4px;top:1241px;width:1764px;height:1.5px;background:#e1e1e1;"></div>
<div class="t" id="t292" style="top:1253.63px;font-size:21.74px;color:#323130;font-weight:normal;font-family:'Liberation Sans', sans-serif;font-style:normal;left:5.20px;transform:scaleX(0.9505);transform-origin:0 50%;">Total Rows: 21</div>
<div class="a" style="left:1106px;top:1252px;width:99px;height:36px;background:#fff;box-sizing:border-box;border:1px solid #a19f9d;"></div>
<div class="t" id="t293" style="top:1259.56px;font-size:20.29px;color:#323130;font-weight:normal;font-family:'Liberation Sans', sans-serif;font-style:normal;left:1126.62px;transform:scaleX(0.9810);transform-origin:0 50%;">100 %</div>
<div class="t" id="t294" style="top:1253.83px;font-size:21.74px;color:#323130;font-weight:normal;font-family:'Liberation Sans', sans-serif;font-style:normal;left:1321.15px;transform:scaleX(0.8536);transform-origin:0 50%;">Page</div>
<div class="a" style="left:1372px;top:1248px;width:46px;height:35px;background:#fff;box-sizing:border-box;border:1px solid #e1e1e1;"></div>
<div class="t" style="top:1253.83px;font-size:21.74px;color:#323130;font-weight:normal;font-family:'Liberation Sans', sans-serif;font-style:normal;left:895.00px;width:1000px;text-align:center;"><span id="t295">1</span></div>
<div class="t" id="t296" style="top:1253.83px;font-size:21.74px;color:#323130;font-weight:normal;font-family:'Liberation Sans', sans-serif;font-style:normal;left:1425.50px;transform:scaleX(0.9868);transform-origin:0 50%;">of 2</div>
<div class="t" id="t297" style="top:1253.83px;font-size:21.74px;color:#323130;font-weight:normal;font-family:'Liberation Sans', sans-serif;font-style:normal;left:1598.70px;transform:scaleX(1.0956);transform-origin:0 50%;">1 to 17 of 21</div>
<div class="a" style="left:1768px;top:0px;width:532px;height:1289px;background:#fff;box-shadow:0 0 6px rgba(0,0,0,0.18);"></div>
<div class="a" style="left:1768px;top:107px;width:532px;height:1066px;background:#f4f4f4;"></div>
<div class="t" id="t298" style="top:46.52px;font-size:35.36px;color:#252423;font-weight:normal;font-family:'Liberation Sans', sans-serif;font-style:normal;left:1851.04px;transform:scaleX(0.9788);transform-origin:0 50%;">Formula Measure</div>
<div class="t" id="t299" style="top:142.52px;font-size:21.16px;color:#323130;font-weight:normal;font-family:'Liberation Sans', sans-serif;font-style:normal;-webkit-text-stroke:0.45px currentColor;left:1798.00px;transform:scaleX(1.1193);transform-origin:0 50%;">Title</div>
<div class="t" id="t300" style="top:142.52px;font-size:21.16px;color:#a4262c;font-weight:bold;font-family:'Liberation Sans', sans-serif;font-style:normal;left:1846.00px;">*</div>
<div class="a" style="left:1798px;top:181px;width:473px;height:58px;background:#fff;box-sizing:border-box;border:2px solid #e1e1e1;"></div>
<div class="t" id="t301" style="top:199.66px;font-size:22.17px;color:#323130;font-weight:normal;font-family:'Liberation Sans', sans-serif;font-style:normal;left:1807.09px;transform:scaleX(0.9134);transform-origin:0 50%;">MAXDATE</div>
<div class="t" id="t302" style="top:267.62px;font-size:21.16px;color:#323130;font-weight:normal;font-family:'Liberation Sans', sans-serif;font-style:normal;-webkit-text-stroke:0.45px currentColor;left:1797.01px;transform:scaleX(0.9880);transform-origin:0 50%;">Insert as</div>
<div class="t" id="t303" style="top:267.62px;font-size:21.16px;color:#a4262c;font-weight:bold;font-family:'Liberation Sans', sans-serif;font-style:normal;left:1882.60px;">*</div>
<div class="a" style="left:1797px;top:305px;width:177px;height:149px;background:#fff;"></div>
<div class="a" style="left:1989px;top:305px;width:173px;height:150px;background:#fff;box-sizing:border-box;border:2px solid #4a96dc;"></div>
<div class="t" id="t304" style="top:380.60px;font-size:21.30px;color:#323130;font-weight:normal;font-family:'Liberation Sans', sans-serif;font-style:normal;left:1860.10px;transform:scaleX(0.9598);transform-origin:0 50%;">Visual</div>
<div class="t" id="t305" style="top:413.81px;font-size:20.58px;color:#323130;font-weight:normal;font-family:'Liberation Sans', sans-serif;font-style:normal;left:1847.31px;transform:scaleX(0.9947);transform-origin:0 50%;">Measure</div>
<div class="t" id="t306" style="top:380.60px;font-size:21.30px;color:#323130;font-weight:normal;font-family:'Liberation Sans', sans-serif;font-style:normal;left:2049.70px;transform:scaleX(0.9475);transform-origin:0 50%;">Visual</div>
<div class="t" id="t307" style="top:413.67px;font-size:20.87px;color:#323130;font-weight:normal;font-family:'Liberation Sans', sans-serif;font-style:normal;left:2039.06px;transform:scaleX(1.0402);transform-origin:0 50%;">Column</div>
<div class="t" id="t308" style="top:482.83px;font-size:21.74px;color:#323130;font-weight:normal;font-family:'Liberation Sans', sans-serif;font-style:normal;-webkit-text-stroke:0.45px currentColor;left:1798.04px;transform:scaleX(0.9595);transform-origin:0 50%;">Formula</div>
<div class="t" id="t309" style="top:482.83px;font-size:21.74px;color:#a4262c;font-weight:bold;font-family:'Liberation Sans', sans-serif;font-style:normal;left:1877.00px;">*</div>
<div class="a" style="left:1798px;top:523px;width:473px;height:226px;background:#fff;box-sizing:border-box;border:1px solid #d6d6d6;"></div>
<div class="a" style="left:1799px;top:705px;width:471px;height:43px;background:#f0f0f0;border-top:1px solid #e1e1e1;"></div>
<div class="t" id="t310" style="top:537.72px;font-size:22.46px;color:#2b7cd3;font-weight:normal;font-family:'Liberation Sans', sans-serif;font-style:normal;left:1806.61px;transform:scaleX(0.8858);transform-origin:0 50%;">MAXDATE</div>
<div class="t" id="t311" style="top:754.66px;font-size:18.99px;color:#605e5c;font-weight:normal;font-family:'Liberation Sans', sans-serif;font-style:normal;-webkit-text-stroke:0.45px currentColor;left:1826.58px;transform:scaleX(1.0193);transform-origin:0 50%;">Example</div>
<div class="t" id="t312" style="top:754.66px;font-size:18.99px;color:#605e5c;font-weight:normal;font-family:'Liberation Sans', sans-serif;font-style:normal;left:1905.50px;">:</div>
<div class="t" id="t313" style="top:754.66px;font-size:18.99px;color:#8a8886;font-weight:normal;font-family:'Liberation Sans', sans-serif;font-style:italic;left:1919.21px;transform:scaleX(1.0103);transform-origin:0 50%;">[Sum of Sales] + [Forecast]</div>
<div class="t" id="t314" style="top:785.23px;font-size:19.13px;color:#605e5c;font-weight:normal;font-family:'Liberation Sans', sans-serif;font-style:normal;left:1827.60px;transform:scaleX(0.9735);transform-origin:0 50%;">Use <b>Ctrl + Space</b> to open suggestion, also select any</div>
<div class="t" id="t315" style="top:814.73px;font-size:19.13px;color:#605e5c;font-weight:normal;font-family:'Liberation Sans', sans-serif;font-style:normal;left:1827.60px;transform:scaleX(1.0306);transform-origin:0 50%;">column or cell to insert the reference</div>
<div class="t" id="t316" style="top:874.19px;font-size:20.72px;color:#323130;font-weight:normal;font-family:'Liberation Sans', sans-serif;font-style:normal;-webkit-text-stroke:0.45px currentColor;left:1797.97px;transform:scaleX(1.0253);transform-origin:0 50%;">Row aggregation type</div>
<div class="t" id="t317" style="top:874.19px;font-size:20.72px;color:#a4262c;font-weight:bold;font-family:'Liberation Sans', sans-serif;font-style:normal;left:2011.40px;">*</div>
<div class="a" style="left:1798px;top:912px;width:473px;height:56px;background:#fff;box-sizing:border-box;border:1px solid #e1e1e1;"></div>
<div class="t" id="t318" style="top:930.38px;font-size:21.45px;color:#323130;font-weight:normal;font-family:'Liberation Sans', sans-serif;font-style:normal;left:1817.02px;transform:scaleX(0.9781);transform-origin:0 50%;">Formula</div>
<div class="t" id="t319" style="top:996.88px;font-size:21.45px;color:#323130;font-weight:normal;font-family:'Liberation Sans', sans-serif;font-style:normal;-webkit-text-stroke:0.45px currentColor;left:1833.99px;transform:scaleX(1.0094);transform-origin:0 50%;">Description</div>
<div class="a" style="left:1968px;top:1199px;width:144px;height:65px;background:#f3f3f3;"></div>
<div class="t" id="t320" style="top:1219.99px;font-size:23.91px;color:#323130;font-weight:normal;font-family:'Liberation Sans', sans-serif;font-style:normal;left:2004.03px;transform:scaleX(0.9708);transform-origin:0 50%;">Cancel</div>
<div class="a" style="left:2130px;top:1199px;width:145px;height:65px;background:#0078d4;"></div>
<div class="t" id="t321" style="top:1219.99px;font-size:23.91px;color:#ffffff;font-weight:normal;font-family:'Liberation Sans', sans-serif;font-style:normal;-webkit-text-stroke:0.45px currentColor;left:2164.72px;transform:scaleX(0.9763);transform-origin:0 50%;">Update</div>
<svg class="a" style="left:0;top:0" width="2304" height="1293" viewBox="0 0 2304 1293" fill="none"><rect x="35" y="84" width="30.5" height="30.5" stroke="#a19f9d" stroke-width="1.7"/><rect x="35.5" y="94" width="29.5" height="10" fill="#b7d5f2" stroke="#8eb0d8" stroke-width="1.6"/><path d="M103.6 91.8H119.6M111.6 83.8V99.8M118.4 107.9H134.3" stroke="#8eb0d8" stroke-width="1.8"/><path d="M105.5 114L131.6 88" stroke="#a19f9d" stroke-width="1.6"/><path d="M729.2 91.8H745.2M737.2 83.8V99.8M743.9 107.8H760" stroke="#8eb0d8" stroke-width="1.8"/><path d="M731 114.4L756.8 88.2" stroke="#a19f9d" stroke-width="1.6"/><rect x="170.2" y="84.8" width="28" height="28.6" stroke="#323130" stroke-width="1.7"/><rect x="170.5" y="94" width="27.5" height="10" fill="#6ea8e4" stroke="#1f59a6" stroke-width="1.8"/><circle cx="193" cy="107.5" r="7.5" fill="#f4f4f4"/><path d="M188.5 110.5l3.2-1.2M188.5 110.5l1.2 3M188.5 110.5c3 0 5.5-2 5.5-5.5M194 104.8l-2 1.8M194 104.8l2 2" stroke="#323130" stroke-width="1.4" stroke-linecap="round"/><path d="M248.6 86.9H272.3V110.5M252.4 83.6H276V107" stroke="#323130" stroke-width="1.7"/><rect x="244.8" y="91" width="23.2" height="23.2" fill="#f4f4f4" stroke="#323130" stroke-width="1.7"/><rect x="245.2" y="98.5" width="22.5" height="8.5" fill="#6ea8e4" stroke="#1f59a6" stroke-width="1.8"/><path d="M381.5 83.8H397.2L390 95.5H398.5L375.3 112L381.5 100H373.3Z" fill="#b7d5f2" stroke="#8eb0d8" stroke-width="1.4" stroke-linejoin="round"/><path d="M475 109.4H468.6V83.6H501.3V109.4H498" stroke="#a19f9d" stroke-width="1.6"/><rect x="479.6" y="91.5" width="13.5" height="22.5" fill="#f4f4f4" stroke="#a19f9d" stroke-width="1.6"/><rect x="482.4" y="94.4" width="8" height="3.6" fill="#b7d5f2" stroke="#8eb0d8" stroke-width="1"/><rect x="482.5" y="101.5" width="1.5" height="1.5" fill="#a19f9d"/><rect x="485.7" y="101.5" width="1.5" height="1.5" fill="#a19f9d"/><rect x="488.90000000000003" y="101.5" width="1.5" height="1.5" fill="#a19f9d"/><rect x="482.5" y="105.3" width="1.5" height="1.5" fill="#a19f9d"/><rect x="485.7" y="105.3" width="1.5" height="1.5" fill="#a19f9d"/><rect x="488.90000000000003" y="105.3" width="1.5" height="1.5" fill="#a19f9d"/><rect x="482.5" y="109.1" width="1.5" height="1.5" fill="#a19f9d"/><rect x="485.7" y="109.1" width="1.5" height="1.5" fill="#a19f9d"/><rect x="488.90000000000003" y="109.1" width="1.5" height="1.5" fill="#a19f9d"/><path d="M565 83.5V115" stroke="#323130" stroke-width="1.5" stroke-dasharray="2.6 2.2"/><path d="M549.5 97.8H561.5M556.5 92.5L561.8 97.8L556.5 103M583 97.8H569M574.5 92.5L569.2 97.8L574.5 103" stroke="#1f59a6" stroke-width="1.9" stroke-linecap="round" stroke-linejoin="round"/><path d="M645 85.7H677.7M645 113H677.7M645 98.9H677.7" stroke="#a19f9d" stroke-width="1.6"/><circle cx="663" cy="98.9" r="5" fill="#b7d5f2" stroke="#8eb0d8" stroke-width="1.4"/><path d="M820 107.2H804.8V83.6H836.2V107.2H829.5" stroke="#a19f9d" stroke-width="1.6"/><path d="M820.5 97.8H829M820.5 114.3H829M824.8 97.8V114.3" stroke="#8eb0d8" stroke-width="1.8"/><path d="M911.6 110.5V83.4H937M915.2 113V86.8H940.5" stroke="#323130" stroke-width="1.6"/><rect x="918.8" y="90.4" width="24.5" height="23.8" fill="#fff" stroke="#323130" stroke-width="1.7"/><rect x="926.8" y="90.6" width="8.3" height="23.4" fill="#6ea8e4" stroke="#1f59a6" stroke-width="1.6"/><circle cx="947.3" cy="92" r="13.6" fill="#3b6fc2"/><text x="947.3" y="99.8" text-anchor="middle" font-family="Liberation Sans" font-weight="bold" font-size="21" fill="#fff">4</text><path d="M1036.4 84.5H1032.5Q1029.7 84.5 1029.7 87.3V105.8Q1029.7 108.6 1032.5 108.6H1036.4M1046 84.5H1050Q1052.8 84.5 1052.8 87.3V99" stroke="#323130" stroke-width="1.8"/><path d="M1035.6 91.5Q1039.6 89.3 1041 93.5L1042 99.5Q1043.2 104 1047.3 101.6M1046.8 90.8L1035.8 102.8" stroke="#1f59a6" stroke-width="1.5" stroke-linecap="round"/><path d="M1046.8 108.6H1058.4M1052.6 102.8V114.4" stroke="#1f59a6" stroke-width="1.8"/><path d="M1148.8 82.7V107.8H1159.7M1148.8 97.6L1158.5 91.8L1167 87.5L1172.5 91.8" stroke="#a19f9d" stroke-width="1.6"/><rect x="1163" y="97.8" width="17" height="17" fill="#f4f4f4" stroke="#a19f9d" stroke-width="1.6"/><rect x="1168.3" y="98.3" width="6.7" height="16" fill="#b7d5f2" stroke="#8eb0d8" stroke-width="1.4"/><rect x="1258.8" y="94.2" width="4.2000000000000455" height="20.700000000000003" stroke="#a19f9d" stroke-width="1.5"/><rect x="1266" y="88.8" width="4" height="19.200000000000003" stroke="#a19f9d" stroke-width="1.5"/><rect x="1273.4" y="83.5" width="4.0" height="24.5" stroke="#a19f9d" stroke-width="1.5"/><rect x="1280.7" y="88.8" width="4.2999999999999545" height="19.200000000000003" stroke="#a19f9d" stroke-width="1.5"/><path d="M1266 111.2H1290.4" stroke="#8eb0d8" stroke-width="1.6"/><circle cx="1278.2" cy="111.2" r="5" fill="#b7d5f2" stroke="#8eb0d8" stroke-width="1.4"/><rect x="1360" y="83.8" width="20.5" height="20" fill="#b7d5f2"/><rect x="1350" y="83.8" width="30.5" height="30.5" stroke="#a19f9d" stroke-width="1.7"/><path d="M1360.2 83.8V114.3M1350 103.9H1380.5" stroke="#a19f9d" stroke-width="1.6"/><path d="M1435.25 100A11.75 11.75 0 1 0 1423.5 111.75" stroke="#323130" stroke-width="1.7"/><path d="M1423.5 85V92.6M1408.2 100H1416M1430.7 100H1438.2M1423.5 107.3V114.4" stroke="#323130" stroke-width="1.7"/><circle cx="1423.5" cy="99.7" r="3.6" fill="#6fb0f0" stroke="#1f4f9c" stroke-width="1.6"/><path d="M1427.5 108.2L1430.3 111.2L1436.3 104.5" stroke="#1f4f9c" stroke-width="1.8"/><path d="M1468.5 88L1471.5 84.5L1476 88.5L1475 90.5L1496.5 110.5Q1498.5 112.8 1496 114.5Q1494 116 1492 113.8L1470.5 93L1468.5 92.5Z" stroke="#323130" stroke-width="2" stroke-linejoin="round"/><path d="M1470 113.5Q1467 110.8 1470 107.8L1484 94Q1482 87.5 1487.5 84.2Q1491.5 82.3 1495.5 83.8L1490.5 88.5L1491.5 91.5L1494.8 92.5L1499.5 87.5Q1500.8 92.5 1497.5 96Q1493.5 99.5 1489 98.3L1475 112.5Q1472.5 115.5 1470 113.5Z" fill="#f4f4f4" stroke="#1f59a6" stroke-width="2.2" stroke-linejoin="round"/><circle cx="1472.5" cy="110.5" r="1.1" fill="#1f59a6"/><path d="M1562 114.3H1552V83.2H1570.5L1577.5 90V96.5M1570.5 83.2V90H1577.5" stroke="#a19f9d" stroke-width="1.6"/><circle cx="1573.6" cy="102.9" r="5.6" stroke="#8eb0d8" stroke-width="1.7"/><path d="M1569.6 107L1561.5 113.8" stroke="#8eb0d8" stroke-width="1.7"/><rect x="1655" y="88.7" width="20" height="20" stroke="#8eb0d8" stroke-width="1.7"/><rect x="1662.2" y="95.7" width="12.8" height="13" fill="#b7d5f2" stroke="#a19f9d" stroke-width="1.4"/><path d="M1675 95.7H1682.5V116.3H1662.2V108.7" stroke="#a19f9d" stroke-width="1.7"/><path d="M907.5 56H900.8V24.8H932.8V37M916.3 24.8V37" stroke="#323130" stroke-width="1.8"/><path d="M917.8 54.8Q915 56.5 915.2 53.2L917 48.5L928.5 37.8Q931.2 35.6 933.3 37.7Q935 39.8 932.8 42L921.3 52.6Z" stroke="#1f59a6" stroke-width="2.6" stroke-linejoin="round"/><path d="M917.5 48.8L921.3 52.6" stroke="#1f59a6" stroke-width="1.6"/><path d="M936.2 37.2L942 43L948 37.2" stroke="#323130" stroke-width="2"/><path d="M1212.6 29.6H1228.6M1220.6 21.6V37.6" stroke="#7f9fca" stroke-width="1.8"/><path d="M1232 24.6H1242.3V45H1223.4L1219.2 51.5L1215.3 45H1211V37.8" stroke="#a19f9d" stroke-width="1.8" stroke-linejoin="miter"/><path d="M1271.2 34.7L1277.8 41.3L1284.5 34.7" stroke="#323130" stroke-width="2.4"/><circle cx="1371" cy="37.2" r="13.6" stroke="#252423" stroke-width="1.8"/><circle cx="1371" cy="33.8" r="5.2" stroke="#252423" stroke-width="1.7"/><path d="M1363.8 45Q1364.8 39.8 1371 39.8Q1377.2 39.8 1378.2 45" stroke="#252423" stroke-width="1.7"/><path d="M32.5 250.3H23.5M32.5 250.3A8.5 8.5 0 1 1 24 258.8" stroke="#a8a8a8" stroke-width="1.6"/><path d="M27 246.3L22.8 250.5L27 254.7" stroke="#a8a8a8" stroke-width="1.6"/><path d="M81.2 246.6Q79 244.2 76.6 247.4Q75.2 249.6 74.2 254L72 263.5Q70.8 268.8 67 268.6" stroke="#1a4d9c" stroke-width="2.1" stroke-linecap="round"/><circle cx="81.6" cy="246.6" r="1.7" fill="#1a4d9c"/><circle cx="66" cy="267.4" r="1.7" fill="#1a4d9c"/><path d="M69.6 253H78" stroke="#1a4d9c" stroke-width="1.6"/><path d="M80.5 254.2Q83 252.6 84.6 256L87.4 262.2Q88.8 265.2 91.4 263.4M91.8 254.4Q89.8 252.8 87.8 255.6L83.2 262.4Q81.6 264.6 79.8 263.2" stroke="#323130" stroke-width="2"/><g transform="translate(1750.5,468.5)"><path d="M81.2 246.6Q79 244.2 76.6 247.4Q75.2 249.6 74.2 254L72 263.5Q70.8 268.8 67 268.6" stroke="#1a4d9c" stroke-width="2.1" stroke-linecap="round"/><circle cx="81.6" cy="246.6" r="1.7" fill="#1a4d9c"/><circle cx="66" cy="267.4" r="1.7" fill="#1a4d9c"/><path d="M69.6 253H78" stroke="#1a4d9c" stroke-width="1.6"/><path d="M80.5 254.2Q83 252.6 84.6 256L87.4 262.2Q88.8 265.2 91.4 263.4M91.8 254.4Q89.8 252.8 87.8 255.6L83.2 262.4Q81.6 264.6 79.8 263.2" stroke="#323130" stroke-width="2"/></g><path d="M1570.5 270.8L1588.8 252.4M1570.5 270.8V263M1570.5 270.8H1578.3M1588.8 252.4H1581M1588.8 252.4V260.2" stroke="#a8a8a8" stroke-width="1.6"/><path d="M1639.8 257.8L1646 264.8L1660 249.5" stroke="#a8a8a8" stroke-width="1.6"/><path d="M1689 249.6L1705 265.4M1705 249.6L1689 265.4" stroke="#a8a8a8" stroke-width="1.6"/><path d="M1745.5 247.5L1753.8 255.8L1751 256.8L1747.5 262L1748.5 265L1737 253.5L1740 254.5L1745 251Z" fill="#1b1a19" stroke="#1b1a19" stroke-width="1" stroke-linejoin="round"/><path d="M1742.5 259L1733.5 268" stroke="#1b1a19" stroke-width="1.8"/><defs><filter id="sh" x="-50%" y="-20%" width="200%" height="140%"><feGaussianBlur stdDeviation="1.6"/></filter></defs><path d="M1707.2 443L1711 443L1713.5 521.5L1720.5 521.5L1710 546L1699.2 521.5L1705.5 521.5Z" fill="#000" opacity="0.35" filter="url(#sh)" transform="translate(1.5,2)"/><path d="M1707.2 441.5L1709.3 441.5L1712.8 521L1719.6 521L1709 545.5L1698 521L1704.5 521Z" fill="#ee0000"/><path d="M1052.06 1263.70 L1052.06 1269.90 L1047.68 1271.98 L1048.56 1269.84 L1050.19 1274.41 L1045.81 1278.79 L1041.24 1277.16 L1043.38 1276.28 L1041.30 1280.66 L1035.10 1280.66 L1033.02 1276.28 L1035.16 1277.16 L1030.59 1278.79 L1026.21 1274.41 L1027.84 1269.84 L1028.72 1271.98 L1024.34 1269.90 L1024.34 1263.70 L1028.72 1261.62 L1027.84 1263.76 L1026.21 1259.19 L1030.59 1254.81 L1035.16 1256.44 L1033.02 1257.32 L1035.10 1252.94 L1041.30 1252.94 L1043.38 1257.32 L1041.24 1256.44 L1045.81 1254.81 L1050.19 1259.19 L1048.56 1263.76 L1047.68 1261.62Z" stroke="#323130" stroke-width="1.5" stroke-linejoin="round"/><circle cx="1038.2" cy="1266.8" r="5.2" stroke="#1f59a6" stroke-width="1.8"/><path d="M1072 1268.2H1090.4" stroke="#323130" stroke-width="2"/><path d="M1215 1268.9H1234.5M1224.75 1259.2V1278.6" stroke="#323130" stroke-width="2"/><path d="M1270 1257.6V1274.3M1287 1257.8L1279 1266L1287 1274.2M1310.5 1257.8L1302.3 1266L1310.5 1274.2" stroke="#a19f9d" stroke-width="2"/><path d="M1472.5 1257.8L1481.2 1266L1472.5 1274.2M1495.5 1257.8L1504.2 1266L1495.5 1274.2M1512 1257.6V1274.3" stroke="#1b1a19" stroke-width="2.4"/><path d="M1813.4 56L1802.6 66.3L1813.4 76.7" stroke="#323130" stroke-width="1.6"/><circle cx="2143.3" cy="60.5" r="9.6" stroke="#323130" stroke-width="1.3"/><path d="M2143.3 58.3V66.3" stroke="#323130" stroke-width="1.6"/><circle cx="2143.3" cy="55" r="1.1" fill="#323130"/><path d="M2260.7 62L2281.5 81.6M2281.5 62L2260.7 81.6" stroke="#323130" stroke-width="2"/><circle cx="1826.5" cy="337.2" r="10.3" fill="#fff" stroke="#767676" stroke-width="1.6"/><circle cx="2017.9" cy="337.2" r="10.3" fill="#fff" stroke="#0f6cff" stroke-width="1.8"/><circle cx="2017.9" cy="337.2" r="6.3" fill="#0f6cff"/><rect x="1853.6" y="341.1" width="66.4" height="28.1" fill="#fff" stroke="#3b3a39" stroke-width="1.6"/><rect x="1869.2" y="348.3" width="7.7999999999999545" height="20.9" fill="#6ea8e4" stroke="#1f59a6" stroke-width="1.5"/><rect x="1891.4" y="348.3" width="8.0" height="20.9" fill="#6ea8e4" stroke="#1f59a6" stroke-width="1.5"/><rect x="1912.6" y="348.3" width="7.400000000000091" height="20.9" fill="#6ea8e4" stroke="#1f59a6" stroke-width="1.5"/><path d="M1853.6 348.3H1920M1876.5 341.1V348.3M1899.2 341.1V348.3M1862 348.3V369.2M1884 348.3V369.2M1904.7 348.3V369.2" stroke="#3b3a39" stroke-width="1.5"/><path d="M1872.4 337V325.8H1915.8V337M1893.2 325.8V337M1868.6 333.2L1872.4 337.2L1876.2 333.2M1889.4 333.2L1893.2 337.2L1897 333.2M1912 333.2L1915.8 337.2L1919.6 333.2" stroke="#1f59a6" stroke-width="1.6"/><rect x="2045.3" y="341.7" width="63.2" height="27.5" fill="#fff" stroke="#3b3a39" stroke-width="1.6"/><path d="M2045.3 348.6H2099M2063.6 341.7V369.2M2081.7 341.7V369.2M2054.7 348.6V369.2M2072.8 348.6V369.2M2090.8 348.6V369.2" stroke="#3b3a39" stroke-width="1.5"/><rect x="2099.2" y="341.7" width="9.3" height="27.5" fill="#6ea8e4" stroke="#1f59a6" stroke-width="1.6"/><path d="M2104.3 328.2V338.6M2100.6 334.6L2104.3 338.6L2108 334.6" stroke="#1f59a6" stroke-width="1.6"/><path d="M2234.5 504L2256 483.5M2234.5 504V496M2234.5 504H2242.5M2256 483.5H2248M2256 483.5V491.5" stroke="#323130" stroke-width="1.6"/><path d="M1804.5 771Q1804 766 1801.5 763.5Q1799.5 761 1799.8 758.5Q1800.5 753 1807.5 753Q1814.5 753 1815.2 758.5Q1815.5 761 1813.5 763.5Q1811 766 1810.5 771ZM1804.7 774.5H1810.3" stroke="#605e5c" stroke-width="1.4"/><path d="M2231 933.5L2241.5 945L2252 933.5" stroke="#323130" stroke-width="1.8"/><path d="M1802.5 997.8L1813.5 1007.5L1802.5 1017.2" stroke="#323130" stroke-width="1.6"/></svg>
</body></html>
